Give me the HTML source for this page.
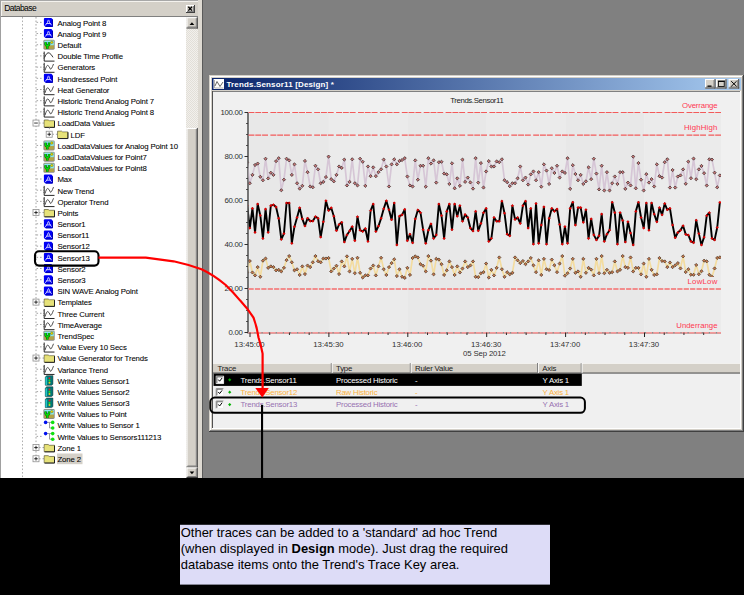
<!DOCTYPE html>
<html><head><meta charset="utf-8"><style>
html,body{margin:0;padding:0;background:#000;width:744px;height:595px;overflow:hidden}
svg{display:block;font-family:'Liberation Sans',sans-serif}
text{font-family:'Liberation Sans',sans-serif}
</style></head><body>
<svg width="744" height="595" viewBox="0 0 744 595">
<rect x="0" y="0" width="744" height="595" fill="#000" />
<rect x="0" y="0" width="744" height="478" fill="#808080" />
<rect x="0" y="0" width="203" height="478" fill="#d4d0c8" />
<rect x="0" y="0" width="203" height="1" fill="#a8a8a8" />
<rect x="0" y="0" width="1" height="478" fill="#a0a0a0" />
<rect x="1" y="1" width="197" height="1" fill="#f4f2ee" />
<rect x="1" y="1" width="1" height="15" fill="#f4f2ee" />
<rect x="198" y="0" width="4" height="478" fill="#dedad2" />
<rect x="202" y="0" width="1" height="478" fill="#5a5a5a" />
<text x="4.2" y="11.2" font-size="8.5" fill="#000" text-anchor="start" font-weight="normal" letter-spacing="-0.55" >Database</text>
<rect x="1" y="16" width="197" height="1" fill="#808080" />
<rect x="186" y="5" width="9" height="8" fill="#d4d0c8" />
<rect x="186" y="5" width="8" height="1" fill="#fff" />
<rect x="186" y="5" width="1" height="7" fill="#fff" />
<rect x="186" y="12" width="9" height="1" fill="#404040" />
<rect x="194" y="5" width="1" height="8" fill="#404040" />
<rect x="187" y="11" width="7" height="1" fill="#808080" />
<rect x="193" y="6" width="1" height="6" fill="#808080" />
<path d="M188.3 6.8 L192 10.6 M192 6.8 L188.3 10.6" stroke="#000" stroke-width="1.3"/>
<rect x="1" y="17" width="185" height="461" fill="#ffffff" />
<defs><pattern id="dith" width="2" height="2" patternUnits="userSpaceOnUse"><rect width="2" height="2" fill="#f2f0ec"/><rect width="1" height="1" fill="#e2dfd8"/><rect x="1" y="1" width="1" height="1" fill="#e2dfd8"/></pattern></defs>
<rect x="186" y="17" width="12" height="461" fill="url(#dith)" />
<rect x="186.5" y="17.2" width="11.3" height="11.3" fill="#d4d0c8" />
<rect x="186.5" y="17.2" width="11.3" height="1" fill="#fff" />
<rect x="186.5" y="17.2" width="1" height="11.3" fill="#fff" />
<rect x="186.5" y="27.5" width="11.3" height="1" fill="#404040" />
<rect x="196.8" y="17.2" width="1" height="11.3" fill="#404040" />
<rect x="187.5" y="26.5" width="9.3" height="1" fill="#808080" />
<rect x="195.8" y="18.2" width="1" height="9.3" fill="#808080" />
<path d="M189.6 25 L194.3 25 L191.95 22.3 Z" fill="#000"/>
<rect x="186.5" y="128" width="11.3" height="339.5" fill="#d4d0c8" />
<rect x="186.5" y="128" width="11.3" height="1" fill="#fff" />
<rect x="186.5" y="128" width="1" height="339.5" fill="#fff" />
<rect x="186.5" y="466.5" width="11.3" height="1" fill="#404040" />
<rect x="196.8" y="128" width="1" height="339.5" fill="#404040" />
<rect x="187.5" y="465.5" width="9.3" height="1" fill="#808080" />
<rect x="195.8" y="129" width="1" height="337.5" fill="#808080" />
<rect x="186.5" y="467.5" width="11.3" height="10.5" fill="#d4d0c8" />
<rect x="186.5" y="467.5" width="11.3" height="1" fill="#fff" />
<rect x="186.5" y="467.5" width="1" height="10.5" fill="#fff" />
<rect x="186.5" y="477.0" width="11.3" height="1" fill="#404040" />
<rect x="196.8" y="467.5" width="1" height="10.5" fill="#404040" />
<rect x="187.5" y="476.0" width="9.3" height="1" fill="#808080" />
<rect x="195.8" y="468.5" width="1" height="8.5" fill="#808080" />
<path d="M189.6 471.5 L194.3 471.5 L191.95 474.2 Z" fill="#000"/>
<line x1="22.5" y1="17" x2="22.5" y2="478" stroke="#b0b0b0" stroke-width="1" stroke-dasharray="1.6 1.9"/>
<line x1="36" y1="17" x2="36" y2="458.76" stroke="#a4a4a4" stroke-width="1" stroke-dasharray="1.6 1.9"/>
<line x1="36.5" y1="22.35" x2="43.5" y2="22.35" stroke="#a4a4a4" stroke-width="1" stroke-dasharray="1.6 1.9"/>
<path d="M43.9 18.900000000000002 Q43.9 17.900000000000002 44.9 17.900000000000002 H51.3 L53.0 19.6 V25.900000000000002 Q53.0 26.900000000000002 52.0 26.900000000000002 H45.5 L43.9 25.300000000000004 Z" fill="#0000f4"/>
<path d="M52.5 19.900000000000002 V26.400000000000002 H45.9" stroke="#0000b0" stroke-width="1" fill="none"/>
<path d="M45.5 25.1 L47.5 22.5 Q48.0 19.900000000000002 48.5 19.900000000000002 Q49.0 19.900000000000002 49.5 22.5 L51.3 24.900000000000002 M46.5 23.5 H50.5" stroke="#c8c8ff" stroke-width="1" fill="none" stroke-linecap="round"/>
<text x="57.5" y="25.650000000000002" font-size="7.8" fill="#000" text-anchor="start" font-weight="normal" letter-spacing="-0.14" stroke="#000" stroke-width="0.07">Analog Point 8</text>
<line x1="36.5" y1="33.54" x2="43.5" y2="33.54" stroke="#a4a4a4" stroke-width="1" stroke-dasharray="1.6 1.9"/>
<path d="M43.9 30.09 Q43.9 29.09 44.9 29.09 H51.3 L53.0 30.79 V37.09 Q53.0 38.09 52.0 38.09 H45.5 L43.9 36.49 Z" fill="#0000f4"/>
<path d="M52.5 31.09 V37.59 H45.9" stroke="#0000b0" stroke-width="1" fill="none"/>
<path d="M45.5 36.29 L47.5 33.69 Q48.0 31.09 48.5 31.09 Q49.0 31.09 49.5 33.69 L51.3 36.09 M46.5 34.69 H50.5" stroke="#c8c8ff" stroke-width="1" fill="none" stroke-linecap="round"/>
<text x="57.5" y="36.839999999999996" font-size="7.8" fill="#000" text-anchor="start" font-weight="normal" letter-spacing="-0.14" stroke="#000" stroke-width="0.07">Analog Point 9</text>
<line x1="36.5" y1="44.730000000000004" x2="43.5" y2="44.730000000000004" stroke="#a4a4a4" stroke-width="1" stroke-dasharray="1.6 1.9"/>
<rect x="43.4" y="39.730000000000004" width="11.3" height="10" rx="1.4" fill="#8a8a8a"/>
<rect x="44.3" y="40.63" width="9.5" height="8.2" fill="#b4a444"/>
<rect x="44.3" y="40.63" width="9.5" height="4.6" fill="#88e8f0"/>
<circle cx="51.8" cy="42.330000000000005" r="1.2" fill="#f0e000" stroke="#505000" stroke-width="0.4"/>
<path d="M47.3 48.63 V45.330000000000005 M45.6 42.13 V44.53 Q45.8 45.53 47.3 45.53 Q48.8 45.53 49.0 44.53 V42.13" stroke="#104010" stroke-width="2.5" fill="none"/>
<path d="M47.3 48.63 V45.330000000000005 M45.6 42.13 V44.53 Q45.8 45.53 47.3 45.53 Q48.8 45.53 49.0 44.53 V42.13" stroke="#00e000" stroke-width="1.5" fill="none"/>
<text x="57.5" y="48.03" font-size="7.8" fill="#000" text-anchor="start" font-weight="normal" letter-spacing="-0.14" stroke="#000" stroke-width="0.07">Default</text>
<line x1="36.5" y1="55.92" x2="43.5" y2="55.92" stroke="#a4a4a4" stroke-width="1" stroke-dasharray="1.6 1.9"/>
<path d="M44.2 51.620000000000005 V61.120000000000005 H54.5" stroke="#101010" stroke-width="0.9" fill="none"/>
<path d="M43.400000000000006 53.42 H44.2 M43.400000000000006 55.92 H44.2 M43.400000000000006 58.120000000000005 H44.2" stroke="#303030" stroke-width="0.7"/>
<path d="M44.6 57.52 Q46.7 51.92 49.2 52.92 Q51.2 53.92 53.0 57.32" stroke="#202020" stroke-width="0.9" fill="none"/>
<text x="57.5" y="59.22" font-size="7.8" fill="#000" text-anchor="start" font-weight="normal" letter-spacing="-0.14" stroke="#000" stroke-width="0.07">Double Time Profile</text>
<line x1="36.5" y1="67.11" x2="43.5" y2="67.11" stroke="#a4a4a4" stroke-width="1" stroke-dasharray="1.6 1.9"/>
<path d="M44.2 62.81 V72.31 H54.5" stroke="#101010" stroke-width="0.9" fill="none"/>
<path d="M43.400000000000006 64.61 H44.2 M43.400000000000006 67.11 H44.2 M43.400000000000006 69.31 H44.2" stroke="#303030" stroke-width="0.7"/>
<path d="M45.0 70.51 Q46.6 64.91 47.800000000000004 65.41 Q49.2 65.91 50.400000000000006 69.11 Q51.2 70.11 53.5 64.01" stroke="#505050" stroke-width="1" fill="none"/>
<text x="57.5" y="70.41" font-size="7.8" fill="#000" text-anchor="start" font-weight="normal" letter-spacing="-0.14" stroke="#000" stroke-width="0.07">Generators</text>
<line x1="36.5" y1="78.3" x2="43.5" y2="78.3" stroke="#a4a4a4" stroke-width="1" stroke-dasharray="1.6 1.9"/>
<path d="M43.9 74.85 Q43.9 73.85 44.9 73.85 H51.3 L53.0 75.55 V81.85 Q53.0 82.85 52.0 82.85 H45.5 L43.9 81.25 Z" fill="#0000f4"/>
<path d="M52.5 75.85 V82.35 H45.9" stroke="#0000b0" stroke-width="1" fill="none"/>
<path d="M45.5 81.05 L47.5 78.44999999999999 Q48.0 75.85 48.5 75.85 Q49.0 75.85 49.5 78.44999999999999 L51.3 80.85 M46.5 79.44999999999999 H50.5" stroke="#c8c8ff" stroke-width="1" fill="none" stroke-linecap="round"/>
<text x="57.5" y="81.6" font-size="7.8" fill="#000" text-anchor="start" font-weight="normal" letter-spacing="-0.14" stroke="#000" stroke-width="0.07">Handressed Point</text>
<line x1="36.5" y1="89.49000000000001" x2="43.5" y2="89.49000000000001" stroke="#a4a4a4" stroke-width="1" stroke-dasharray="1.6 1.9"/>
<path d="M44.2 85.19000000000001 V94.69000000000001 H54.5" stroke="#101010" stroke-width="0.9" fill="none"/>
<path d="M43.400000000000006 86.99000000000001 H44.2 M43.400000000000006 89.49000000000001 H44.2 M43.400000000000006 91.69000000000001 H44.2" stroke="#303030" stroke-width="0.7"/>
<path d="M45.0 92.89000000000001 Q46.6 87.29 47.800000000000004 87.79 Q49.2 88.29 50.400000000000006 91.49000000000001 Q51.2 92.49000000000001 53.5 86.39000000000001" stroke="#505050" stroke-width="1" fill="none"/>
<text x="57.5" y="92.79" font-size="7.8" fill="#000" text-anchor="start" font-weight="normal" letter-spacing="-0.14" stroke="#000" stroke-width="0.07">Heat Generator</text>
<line x1="36.5" y1="100.68" x2="43.5" y2="100.68" stroke="#a4a4a4" stroke-width="1" stroke-dasharray="1.6 1.9"/>
<path d="M44.2 96.38000000000001 V105.88000000000001 H54.5" stroke="#101010" stroke-width="0.9" fill="none"/>
<path d="M43.400000000000006 98.18 H44.2 M43.400000000000006 100.68 H44.2 M43.400000000000006 102.88000000000001 H44.2" stroke="#303030" stroke-width="0.7"/>
<path d="M45.0 104.08000000000001 Q46.6 98.48 47.800000000000004 98.98 Q49.2 99.48 50.400000000000006 102.68 Q51.2 103.68 53.5 97.58000000000001" stroke="#505050" stroke-width="1" fill="none"/>
<text x="57.5" y="103.98" font-size="7.8" fill="#000" text-anchor="start" font-weight="normal" letter-spacing="-0.14" stroke="#000" stroke-width="0.07">Historic Trend Analog Point 7</text>
<line x1="36.5" y1="111.87" x2="43.5" y2="111.87" stroke="#a4a4a4" stroke-width="1" stroke-dasharray="1.6 1.9"/>
<path d="M44.2 107.57000000000001 V117.07000000000001 H54.5" stroke="#101010" stroke-width="0.9" fill="none"/>
<path d="M43.400000000000006 109.37 H44.2 M43.400000000000006 111.87 H44.2 M43.400000000000006 114.07000000000001 H44.2" stroke="#303030" stroke-width="0.7"/>
<path d="M45.0 115.27000000000001 Q46.6 109.67 47.800000000000004 110.17 Q49.2 110.67 50.400000000000006 113.87 Q51.2 114.87 53.5 108.77000000000001" stroke="#505050" stroke-width="1" fill="none"/>
<text x="57.5" y="115.17" font-size="7.8" fill="#000" text-anchor="start" font-weight="normal" letter-spacing="-0.14" stroke="#000" stroke-width="0.07">Historic Trend Analog Point 8</text>
<line x1="39" y1="123.06" x2="44" y2="123.06" stroke="#a4a4a4" stroke-width="1" stroke-dasharray="1.6 1.9"/>
<rect x="33" y="120.06" width="6" height="6" fill="#fff" stroke="#909090" stroke-width="0.8"/>
<path d="M34.2 123.06 H37.8" stroke="#000" stroke-width="0.8"/>
<path d="M44.2 119.96000000000001 H48.2 L49.2 120.76 H54.5 V127.16000000000001 H44.2 Z" fill="#e8e070" stroke="#404020" stroke-width="0.6"/>
<rect x="44.800000000000004" y="121.56" width="9.2" height="5.1" fill="#e6e27a"/>
<path d="M54.5 121.16000000000001 V127.36 H44.6" stroke="#202020" stroke-width="1" fill="none"/>
<text x="57.5" y="126.36" font-size="7.8" fill="#000" text-anchor="start" font-weight="normal" letter-spacing="-0.14" stroke="#000" stroke-width="0.07">LoadData Values</text>
<line x1="49.4" y1="127.56" x2="49.4" y2="131.25" stroke="#a4a4a4" stroke-width="1" stroke-dasharray="1.6 1.9"/>
<line x1="52.4" y1="134.25" x2="57.4" y2="134.25" stroke="#a4a4a4" stroke-width="1" stroke-dasharray="1.6 1.9"/>
<rect x="46.2" y="131.25" width="6" height="6" fill="#fff" stroke="#909090" stroke-width="0.8"/>
<path d="M47.400000000000006 134.25 H51.0" stroke="#000" stroke-width="0.8"/>
<path d="M49.2 132.45 V136.05" stroke="#000" stroke-width="0.8"/>
<path d="M57.6 131.14999999999998 H61.6 L62.6 131.95 H67.9 V138.35 H57.6 Z" fill="#e8e070" stroke="#404020" stroke-width="0.6"/>
<rect x="58.2" y="132.75" width="9.2" height="5.1" fill="#e6e27a"/>
<path d="M67.9 132.35 V138.54999999999998 H58.0" stroke="#202020" stroke-width="1" fill="none"/>
<text x="70.5" y="137.55" font-size="7.8" fill="#000" text-anchor="start" font-weight="normal" letter-spacing="-0.14" stroke="#000" stroke-width="0.07">LDF</text>
<line x1="36.5" y1="145.44" x2="43.5" y2="145.44" stroke="#a4a4a4" stroke-width="1" stroke-dasharray="1.6 1.9"/>
<rect x="43.4" y="140.44" width="11.3" height="10" rx="1.4" fill="#8a8a8a"/>
<rect x="44.3" y="141.34" width="9.5" height="8.2" fill="#b4a444"/>
<rect x="44.3" y="141.34" width="9.5" height="4.6" fill="#88e8f0"/>
<circle cx="51.8" cy="143.04" r="1.2" fill="#f0e000" stroke="#505000" stroke-width="0.4"/>
<path d="M47.3 149.34 V146.04 M45.6 142.84 V145.24 Q45.8 146.24 47.3 146.24 Q48.8 146.24 49.0 145.24 V142.84" stroke="#104010" stroke-width="2.5" fill="none"/>
<path d="M47.3 149.34 V146.04 M45.6 142.84 V145.24 Q45.8 146.24 47.3 146.24 Q48.8 146.24 49.0 145.24 V142.84" stroke="#00e000" stroke-width="1.5" fill="none"/>
<text x="57.5" y="148.74" font-size="7.8" fill="#000" text-anchor="start" font-weight="normal" letter-spacing="-0.14" stroke="#000" stroke-width="0.07">LoadDataValues for Analog Point 10</text>
<line x1="36.5" y1="156.63" x2="43.5" y2="156.63" stroke="#a4a4a4" stroke-width="1" stroke-dasharray="1.6 1.9"/>
<rect x="43.4" y="151.63" width="11.3" height="10" rx="1.4" fill="#8a8a8a"/>
<rect x="44.3" y="152.53" width="9.5" height="8.2" fill="#b4a444"/>
<rect x="44.3" y="152.53" width="9.5" height="4.6" fill="#88e8f0"/>
<circle cx="51.8" cy="154.23" r="1.2" fill="#f0e000" stroke="#505000" stroke-width="0.4"/>
<path d="M47.3 160.53 V157.23 M45.6 154.03 V156.43 Q45.8 157.43 47.3 157.43 Q48.8 157.43 49.0 156.43 V154.03" stroke="#104010" stroke-width="2.5" fill="none"/>
<path d="M47.3 160.53 V157.23 M45.6 154.03 V156.43 Q45.8 157.43 47.3 157.43 Q48.8 157.43 49.0 156.43 V154.03" stroke="#00e000" stroke-width="1.5" fill="none"/>
<text x="57.5" y="159.93" font-size="7.8" fill="#000" text-anchor="start" font-weight="normal" letter-spacing="-0.14" stroke="#000" stroke-width="0.07">LoadDataValues for Point7</text>
<line x1="36.5" y1="167.82" x2="43.5" y2="167.82" stroke="#a4a4a4" stroke-width="1" stroke-dasharray="1.6 1.9"/>
<rect x="43.4" y="162.82" width="11.3" height="10" rx="1.4" fill="#8a8a8a"/>
<rect x="44.3" y="163.72" width="9.5" height="8.2" fill="#b4a444"/>
<rect x="44.3" y="163.72" width="9.5" height="4.6" fill="#88e8f0"/>
<circle cx="51.8" cy="165.42" r="1.2" fill="#f0e000" stroke="#505000" stroke-width="0.4"/>
<path d="M47.3 171.72 V168.42 M45.6 165.22 V167.62 Q45.8 168.62 47.3 168.62 Q48.8 168.62 49.0 167.62 V165.22" stroke="#104010" stroke-width="2.5" fill="none"/>
<path d="M47.3 171.72 V168.42 M45.6 165.22 V167.62 Q45.8 168.62 47.3 168.62 Q48.8 168.62 49.0 167.62 V165.22" stroke="#00e000" stroke-width="1.5" fill="none"/>
<text x="57.5" y="171.12" font-size="7.8" fill="#000" text-anchor="start" font-weight="normal" letter-spacing="-0.14" stroke="#000" stroke-width="0.07">LoadDataValues for Point8</text>
<line x1="36.5" y1="179.01" x2="43.5" y2="179.01" stroke="#a4a4a4" stroke-width="1" stroke-dasharray="1.6 1.9"/>
<path d="M43.9 175.56 Q43.9 174.56 44.9 174.56 H51.3 L53.0 176.26 V182.56 Q53.0 183.56 52.0 183.56 H45.5 L43.9 181.96 Z" fill="#0000f4"/>
<path d="M52.5 176.56 V183.06 H45.9" stroke="#0000b0" stroke-width="1" fill="none"/>
<path d="M45.5 181.76 L47.5 179.16 Q48.0 176.56 48.5 176.56 Q49.0 176.56 49.5 179.16 L51.3 181.56 M46.5 180.16 H50.5" stroke="#c8c8ff" stroke-width="1" fill="none" stroke-linecap="round"/>
<text x="57.5" y="182.31" font-size="7.8" fill="#000" text-anchor="start" font-weight="normal" letter-spacing="-0.14" stroke="#000" stroke-width="0.07">Max</text>
<line x1="36.5" y1="190.2" x2="43.5" y2="190.2" stroke="#a4a4a4" stroke-width="1" stroke-dasharray="1.6 1.9"/>
<path d="M44.2 185.89999999999998 V195.39999999999998 H54.5" stroke="#101010" stroke-width="0.9" fill="none"/>
<path d="M43.400000000000006 187.7 H44.2 M43.400000000000006 190.2 H44.2 M43.400000000000006 192.39999999999998 H44.2" stroke="#303030" stroke-width="0.7"/>
<path d="M45.0 193.6 Q46.6 188.0 47.800000000000004 188.5 Q49.2 189.0 50.400000000000006 192.2 Q51.2 193.2 53.5 187.1" stroke="#505050" stroke-width="1" fill="none"/>
<text x="57.5" y="193.5" font-size="7.8" fill="#000" text-anchor="start" font-weight="normal" letter-spacing="-0.14" stroke="#000" stroke-width="0.07">New Trend</text>
<line x1="36.5" y1="201.39" x2="43.5" y2="201.39" stroke="#a4a4a4" stroke-width="1" stroke-dasharray="1.6 1.9"/>
<path d="M44.2 197.08999999999997 V206.58999999999997 H54.5" stroke="#101010" stroke-width="0.9" fill="none"/>
<path d="M43.400000000000006 198.89 H44.2 M43.400000000000006 201.39 H44.2 M43.400000000000006 203.58999999999997 H44.2" stroke="#303030" stroke-width="0.7"/>
<path d="M45.0 204.79 Q46.6 199.19 47.800000000000004 199.69 Q49.2 200.19 50.400000000000006 203.39 Q51.2 204.39 53.5 198.29" stroke="#505050" stroke-width="1" fill="none"/>
<text x="57.5" y="204.69" font-size="7.8" fill="#000" text-anchor="start" font-weight="normal" letter-spacing="-0.14" stroke="#000" stroke-width="0.07">Operator Trend</text>
<line x1="39" y1="212.57999999999998" x2="44" y2="212.57999999999998" stroke="#a4a4a4" stroke-width="1" stroke-dasharray="1.6 1.9"/>
<rect x="33" y="209.57999999999998" width="6" height="6" fill="#fff" stroke="#909090" stroke-width="0.8"/>
<path d="M34.2 212.57999999999998 H37.8" stroke="#000" stroke-width="0.8"/>
<path d="M36 210.77999999999997 V214.38" stroke="#000" stroke-width="0.8"/>
<path d="M44.2 209.47999999999996 H48.2 L49.2 210.27999999999997 H54.5 V216.67999999999998 H44.2 Z" fill="#e8e070" stroke="#404020" stroke-width="0.6"/>
<rect x="44.800000000000004" y="211.07999999999998" width="9.2" height="5.1" fill="#e6e27a"/>
<path d="M54.5 210.67999999999998 V216.87999999999997 H44.6" stroke="#202020" stroke-width="1" fill="none"/>
<text x="57.5" y="215.88" font-size="7.8" fill="#000" text-anchor="start" font-weight="normal" letter-spacing="-0.14" stroke="#000" stroke-width="0.07">Points</text>
<line x1="36.5" y1="223.76999999999998" x2="43.5" y2="223.76999999999998" stroke="#a4a4a4" stroke-width="1" stroke-dasharray="1.6 1.9"/>
<path d="M43.9 220.32 Q43.9 219.32 44.9 219.32 H51.3 L53.0 221.01999999999998 V227.32 Q53.0 228.32 52.0 228.32 H45.5 L43.9 226.72 Z" fill="#0000f4"/>
<path d="M52.5 221.32 V227.82 H45.9" stroke="#0000b0" stroke-width="1" fill="none"/>
<path d="M45.5 226.51999999999998 L47.5 223.92 Q48.0 221.32 48.5 221.32 Q49.0 221.32 49.5 223.92 L51.3 226.32 M46.5 224.92 H50.5" stroke="#c8c8ff" stroke-width="1" fill="none" stroke-linecap="round"/>
<text x="57.5" y="227.07" font-size="7.8" fill="#000" text-anchor="start" font-weight="normal" letter-spacing="-0.14" stroke="#000" stroke-width="0.07">Sensor1</text>
<line x1="36.5" y1="234.95999999999998" x2="43.5" y2="234.95999999999998" stroke="#a4a4a4" stroke-width="1" stroke-dasharray="1.6 1.9"/>
<path d="M43.9 231.51 Q43.9 230.51 44.9 230.51 H51.3 L53.0 232.20999999999998 V238.51 Q53.0 239.51 52.0 239.51 H45.5 L43.9 237.91 Z" fill="#0000f4"/>
<path d="M52.5 232.51 V239.01 H45.9" stroke="#0000b0" stroke-width="1" fill="none"/>
<path d="M45.5 237.70999999999998 L47.5 235.10999999999999 Q48.0 232.51 48.5 232.51 Q49.0 232.51 49.5 235.10999999999999 L51.3 237.51 M46.5 236.10999999999999 H50.5" stroke="#c8c8ff" stroke-width="1" fill="none" stroke-linecap="round"/>
<text x="57.5" y="238.26" font-size="7.8" fill="#000" text-anchor="start" font-weight="normal" letter-spacing="-0.14" stroke="#000" stroke-width="0.07">Sensor11</text>
<line x1="36.5" y1="246.14999999999998" x2="43.5" y2="246.14999999999998" stroke="#a4a4a4" stroke-width="1" stroke-dasharray="1.6 1.9"/>
<path d="M43.9 242.7 Q43.9 241.7 44.9 241.7 H51.3 L53.0 243.39999999999998 V249.7 Q53.0 250.7 52.0 250.7 H45.5 L43.9 249.1 Z" fill="#0000f4"/>
<path d="M52.5 243.7 V250.2 H45.9" stroke="#0000b0" stroke-width="1" fill="none"/>
<path d="M45.5 248.89999999999998 L47.5 246.29999999999998 Q48.0 243.7 48.5 243.7 Q49.0 243.7 49.5 246.29999999999998 L51.3 248.7 M46.5 247.29999999999998 H50.5" stroke="#c8c8ff" stroke-width="1" fill="none" stroke-linecap="round"/>
<text x="57.5" y="249.45" font-size="7.8" fill="#000" text-anchor="start" font-weight="normal" letter-spacing="-0.14" stroke="#000" stroke-width="0.07">Sensor12</text>
<line x1="36.5" y1="257.34" x2="43.5" y2="257.34" stroke="#a4a4a4" stroke-width="1" stroke-dasharray="1.6 1.9"/>
<path d="M43.9 253.89 Q43.9 252.89 44.9 252.89 H51.3 L53.0 254.58999999999997 V260.89 Q53.0 261.89 52.0 261.89 H45.5 L43.9 260.28999999999996 Z" fill="#0000f4"/>
<path d="M52.5 254.89 V261.39 H45.9" stroke="#0000b0" stroke-width="1" fill="none"/>
<path d="M45.5 260.09 L47.5 257.49 Q48.0 254.89 48.5 254.89 Q49.0 254.89 49.5 257.49 L51.3 259.89 M46.5 258.49 H50.5" stroke="#c8c8ff" stroke-width="1" fill="none" stroke-linecap="round"/>
<text x="57.5" y="260.64" font-size="7.8" fill="#000" text-anchor="start" font-weight="normal" letter-spacing="-0.14" stroke="#000" stroke-width="0.07">Sensor13</text>
<line x1="36.5" y1="268.53" x2="43.5" y2="268.53" stroke="#a4a4a4" stroke-width="1" stroke-dasharray="1.6 1.9"/>
<path d="M43.9 265.08 Q43.9 264.08 44.9 264.08 H51.3 L53.0 265.78 V272.08 Q53.0 273.08 52.0 273.08 H45.5 L43.9 271.47999999999996 Z" fill="#0000f4"/>
<path d="M52.5 266.08 V272.58 H45.9" stroke="#0000b0" stroke-width="1" fill="none"/>
<path d="M45.5 271.28 L47.5 268.68 Q48.0 266.08 48.5 266.08 Q49.0 266.08 49.5 268.68 L51.3 271.08 M46.5 269.68 H50.5" stroke="#c8c8ff" stroke-width="1" fill="none" stroke-linecap="round"/>
<text x="57.5" y="271.83" font-size="7.8" fill="#000" text-anchor="start" font-weight="normal" letter-spacing="-0.14" stroke="#000" stroke-width="0.07">Sensor2</text>
<line x1="36.5" y1="279.72" x2="43.5" y2="279.72" stroke="#a4a4a4" stroke-width="1" stroke-dasharray="1.6 1.9"/>
<path d="M43.9 276.27000000000004 Q43.9 275.27000000000004 44.9 275.27000000000004 H51.3 L53.0 276.97 V283.27000000000004 Q53.0 284.27000000000004 52.0 284.27000000000004 H45.5 L43.9 282.67 Z" fill="#0000f4"/>
<path d="M52.5 277.27000000000004 V283.77000000000004 H45.9" stroke="#0000b0" stroke-width="1" fill="none"/>
<path d="M45.5 282.47 L47.5 279.87000000000006 Q48.0 277.27000000000004 48.5 277.27000000000004 Q49.0 277.27000000000004 49.5 279.87000000000006 L51.3 282.27000000000004 M46.5 280.87000000000006 H50.5" stroke="#c8c8ff" stroke-width="1" fill="none" stroke-linecap="round"/>
<text x="57.5" y="283.02000000000004" font-size="7.8" fill="#000" text-anchor="start" font-weight="normal" letter-spacing="-0.14" stroke="#000" stroke-width="0.07">Sensor3</text>
<line x1="36.5" y1="290.91" x2="43.5" y2="290.91" stroke="#a4a4a4" stroke-width="1" stroke-dasharray="1.6 1.9"/>
<path d="M43.9 287.46000000000004 Q43.9 286.46000000000004 44.9 286.46000000000004 H51.3 L53.0 288.16 V294.46000000000004 Q53.0 295.46000000000004 52.0 295.46000000000004 H45.5 L43.9 293.86 Z" fill="#0000f4"/>
<path d="M52.5 288.46000000000004 V294.96000000000004 H45.9" stroke="#0000b0" stroke-width="1" fill="none"/>
<path d="M45.5 293.66 L47.5 291.06000000000006 Q48.0 288.46000000000004 48.5 288.46000000000004 Q49.0 288.46000000000004 49.5 291.06000000000006 L51.3 293.46000000000004 M46.5 292.06000000000006 H50.5" stroke="#c8c8ff" stroke-width="1" fill="none" stroke-linecap="round"/>
<text x="57.5" y="294.21000000000004" font-size="7.8" fill="#000" text-anchor="start" font-weight="normal" letter-spacing="-0.14" stroke="#000" stroke-width="0.07">SIN WAVE Analog Point</text>
<line x1="39" y1="302.1" x2="44" y2="302.1" stroke="#a4a4a4" stroke-width="1" stroke-dasharray="1.6 1.9"/>
<rect x="33" y="299.1" width="6" height="6" fill="#fff" stroke="#909090" stroke-width="0.8"/>
<path d="M34.2 302.1 H37.8" stroke="#000" stroke-width="0.8"/>
<path d="M36 300.3 V303.90000000000003" stroke="#000" stroke-width="0.8"/>
<path d="M44.2 299.0 H48.2 L49.2 299.8 H54.5 V306.2 H44.2 Z" fill="#e8e070" stroke="#404020" stroke-width="0.6"/>
<rect x="44.800000000000004" y="300.6" width="9.2" height="5.1" fill="#e6e27a"/>
<path d="M54.5 300.2 V306.40000000000003 H44.6" stroke="#202020" stroke-width="1" fill="none"/>
<text x="57.5" y="305.40000000000003" font-size="7.8" fill="#000" text-anchor="start" font-weight="normal" letter-spacing="-0.14" stroke="#000" stroke-width="0.07">Templates</text>
<line x1="36.5" y1="313.29" x2="43.5" y2="313.29" stroke="#a4a4a4" stroke-width="1" stroke-dasharray="1.6 1.9"/>
<path d="M44.2 308.99 V318.49 H54.5" stroke="#101010" stroke-width="0.9" fill="none"/>
<path d="M43.400000000000006 310.79 H44.2 M43.400000000000006 313.29 H44.2 M43.400000000000006 315.49 H44.2" stroke="#303030" stroke-width="0.7"/>
<path d="M45.0 316.69 Q46.6 311.09000000000003 47.800000000000004 311.59000000000003 Q49.2 312.09000000000003 50.400000000000006 315.29 Q51.2 316.29 53.5 310.19" stroke="#505050" stroke-width="1" fill="none"/>
<text x="57.5" y="316.59000000000003" font-size="7.8" fill="#000" text-anchor="start" font-weight="normal" letter-spacing="-0.14" stroke="#000" stroke-width="0.07">Three Current</text>
<line x1="36.5" y1="324.48" x2="43.5" y2="324.48" stroke="#a4a4a4" stroke-width="1" stroke-dasharray="1.6 1.9"/>
<path d="M44.2 320.18 V329.68 H54.5" stroke="#101010" stroke-width="0.9" fill="none"/>
<path d="M43.400000000000006 321.98 H44.2 M43.400000000000006 324.48 H44.2 M43.400000000000006 326.68 H44.2" stroke="#303030" stroke-width="0.7"/>
<path d="M45.0 327.88 Q46.6 322.28000000000003 47.800000000000004 322.78000000000003 Q49.2 323.28000000000003 50.400000000000006 326.48 Q51.2 327.48 53.5 321.38" stroke="#505050" stroke-width="1" fill="none"/>
<text x="57.5" y="327.78000000000003" font-size="7.8" fill="#000" text-anchor="start" font-weight="normal" letter-spacing="-0.14" stroke="#000" stroke-width="0.07">TimeAverage</text>
<line x1="36.5" y1="335.67" x2="43.5" y2="335.67" stroke="#a4a4a4" stroke-width="1" stroke-dasharray="1.6 1.9"/>
<rect x="43.4" y="330.67" width="11.3" height="10" rx="1.4" fill="#8a8a8a"/>
<rect x="44.3" y="331.57" width="9.5" height="8.2" fill="#b4a444"/>
<rect x="44.3" y="331.57" width="9.5" height="4.6" fill="#88e8f0"/>
<circle cx="51.8" cy="333.27000000000004" r="1.2" fill="#f0e000" stroke="#505000" stroke-width="0.4"/>
<path d="M47.3 339.57 V336.27000000000004 M45.6 333.07 V335.47 Q45.8 336.47 47.3 336.47 Q48.8 336.47 49.0 335.47 V333.07" stroke="#104010" stroke-width="2.5" fill="none"/>
<path d="M47.3 339.57 V336.27000000000004 M45.6 333.07 V335.47 Q45.8 336.47 47.3 336.47 Q48.8 336.47 49.0 335.47 V333.07" stroke="#00e000" stroke-width="1.5" fill="none"/>
<text x="57.5" y="338.97" font-size="7.8" fill="#000" text-anchor="start" font-weight="normal" letter-spacing="-0.14" stroke="#000" stroke-width="0.07">TrendSpec</text>
<line x1="36.5" y1="346.86" x2="43.5" y2="346.86" stroke="#a4a4a4" stroke-width="1" stroke-dasharray="1.6 1.9"/>
<path d="M44.2 342.56 V352.06 H54.5" stroke="#101010" stroke-width="0.9" fill="none"/>
<path d="M43.400000000000006 344.36 H44.2 M43.400000000000006 346.86 H44.2 M43.400000000000006 349.06 H44.2" stroke="#303030" stroke-width="0.7"/>
<path d="M45.0 350.26 Q46.6 344.66 47.800000000000004 345.16 Q49.2 345.66 50.400000000000006 348.86 Q51.2 349.86 53.5 343.76" stroke="#505050" stroke-width="1" fill="none"/>
<text x="57.5" y="350.16" font-size="7.8" fill="#000" text-anchor="start" font-weight="normal" letter-spacing="-0.14" stroke="#000" stroke-width="0.07">Value Every 10 Secs</text>
<line x1="39" y1="358.05" x2="44" y2="358.05" stroke="#a4a4a4" stroke-width="1" stroke-dasharray="1.6 1.9"/>
<rect x="33" y="355.05" width="6" height="6" fill="#fff" stroke="#909090" stroke-width="0.8"/>
<path d="M34.2 358.05 H37.8" stroke="#000" stroke-width="0.8"/>
<path d="M36 356.25 V359.85" stroke="#000" stroke-width="0.8"/>
<path d="M44.2 354.95 H48.2 L49.2 355.75 H54.5 V362.15 H44.2 Z" fill="#e8e070" stroke="#404020" stroke-width="0.6"/>
<rect x="44.800000000000004" y="356.55" width="9.2" height="5.1" fill="#e6e27a"/>
<path d="M54.5 356.15 V362.35 H44.6" stroke="#202020" stroke-width="1" fill="none"/>
<text x="57.5" y="361.35" font-size="7.8" fill="#000" text-anchor="start" font-weight="normal" letter-spacing="-0.14" stroke="#000" stroke-width="0.07">Value Generator for Trends</text>
<line x1="36.5" y1="369.24" x2="43.5" y2="369.24" stroke="#a4a4a4" stroke-width="1" stroke-dasharray="1.6 1.9"/>
<path d="M44.2 364.94 V374.44 H54.5" stroke="#101010" stroke-width="0.9" fill="none"/>
<path d="M43.400000000000006 366.74 H44.2 M43.400000000000006 369.24 H44.2 M43.400000000000006 371.44 H44.2" stroke="#303030" stroke-width="0.7"/>
<path d="M45.0 372.64 Q46.6 367.04 47.800000000000004 367.54 Q49.2 368.04 50.400000000000006 371.24 Q51.2 372.24 53.5 366.14" stroke="#505050" stroke-width="1" fill="none"/>
<text x="57.5" y="372.54" font-size="7.8" fill="#000" text-anchor="start" font-weight="normal" letter-spacing="-0.14" stroke="#000" stroke-width="0.07">Variance Trend</text>
<line x1="36.5" y1="380.43" x2="43.5" y2="380.43" stroke="#a4a4a4" stroke-width="1" stroke-dasharray="1.6 1.9"/>
<path d="M45.3 376.93 L46.699999999999996 375.63 H52.9 V384.23 L51.599999999999994 385.23 H45.3 Z" fill="#007878" stroke="#102020" stroke-width="0.5"/>
<rect x="45.5" y="377.13" width="1.6" height="7.9" fill="#20c8c8"/>
<circle cx="49.5" cy="378.23" r="1" fill="#e02020"/>
<circle cx="49.5" cy="380.53" r="1" fill="#20e020"/>
<circle cx="49.5" cy="382.73" r="1" fill="#e0d020"/>
<text x="57.5" y="383.73" font-size="7.8" fill="#000" text-anchor="start" font-weight="normal" letter-spacing="-0.14" stroke="#000" stroke-width="0.07">Write Values Sensor1</text>
<line x1="36.5" y1="391.62" x2="43.5" y2="391.62" stroke="#a4a4a4" stroke-width="1" stroke-dasharray="1.6 1.9"/>
<path d="M45.3 388.12 L46.699999999999996 386.82 H52.9 V395.42 L51.599999999999994 396.42 H45.3 Z" fill="#007878" stroke="#102020" stroke-width="0.5"/>
<rect x="45.5" y="388.32" width="1.6" height="7.9" fill="#20c8c8"/>
<circle cx="49.5" cy="389.42" r="1" fill="#e02020"/>
<circle cx="49.5" cy="391.71999999999997" r="1" fill="#20e020"/>
<circle cx="49.5" cy="393.92" r="1" fill="#e0d020"/>
<text x="57.5" y="394.92" font-size="7.8" fill="#000" text-anchor="start" font-weight="normal" letter-spacing="-0.14" stroke="#000" stroke-width="0.07">Write Values Sensor2</text>
<line x1="36.5" y1="402.81" x2="43.5" y2="402.81" stroke="#a4a4a4" stroke-width="1" stroke-dasharray="1.6 1.9"/>
<path d="M45.3 399.31 L46.699999999999996 398.01 H52.9 V406.61 L51.599999999999994 407.61 H45.3 Z" fill="#007878" stroke="#102020" stroke-width="0.5"/>
<rect x="45.5" y="399.51" width="1.6" height="7.9" fill="#20c8c8"/>
<circle cx="49.5" cy="400.61" r="1" fill="#e02020"/>
<circle cx="49.5" cy="402.90999999999997" r="1" fill="#20e020"/>
<circle cx="49.5" cy="405.11" r="1" fill="#e0d020"/>
<text x="57.5" y="406.11" font-size="7.8" fill="#000" text-anchor="start" font-weight="normal" letter-spacing="-0.14" stroke="#000" stroke-width="0.07">Write Values Sensor3</text>
<line x1="36.5" y1="414.0" x2="43.5" y2="414.0" stroke="#a4a4a4" stroke-width="1" stroke-dasharray="1.6 1.9"/>
<rect x="43.4" y="409.0" width="11.3" height="10" rx="1.4" fill="#8a8a8a"/>
<rect x="44.3" y="409.9" width="9.5" height="8.2" fill="#b4a444"/>
<rect x="44.3" y="409.9" width="9.5" height="4.6" fill="#88e8f0"/>
<circle cx="51.8" cy="411.6" r="1.2" fill="#f0e000" stroke="#505000" stroke-width="0.4"/>
<path d="M47.3 417.9 V414.6 M45.6 411.4 V413.8 Q45.8 414.8 47.3 414.8 Q48.8 414.8 49.0 413.8 V411.4" stroke="#104010" stroke-width="2.5" fill="none"/>
<path d="M47.3 417.9 V414.6 M45.6 411.4 V413.8 Q45.8 414.8 47.3 414.8 Q48.8 414.8 49.0 413.8 V411.4" stroke="#00e000" stroke-width="1.5" fill="none"/>
<text x="57.5" y="417.3" font-size="7.8" fill="#000" text-anchor="start" font-weight="normal" letter-spacing="-0.14" stroke="#000" stroke-width="0.07">Write Values to Point</text>
<line x1="36.5" y1="425.19" x2="43.5" y2="425.19" stroke="#a4a4a4" stroke-width="1" stroke-dasharray="1.6 1.9"/>
<path d="M46 422.39 H49.5 V427.99 H52.5 M49.5 422.39 H52.5" stroke="#808080" stroke-width="0.8" fill="none"/>
<circle cx="45.6" cy="422.39" r="1.8" fill="#0010f0"/>
<circle cx="52.7" cy="422.39" r="1.8" fill="#10e010"/>
<circle cx="52.7" cy="427.99" r="1.8" fill="#10e010"/>
<text x="57.5" y="428.49" font-size="7.8" fill="#000" text-anchor="start" font-weight="normal" letter-spacing="-0.14" stroke="#000" stroke-width="0.07">Write Values to Sensor 1</text>
<line x1="36.5" y1="436.38" x2="43.5" y2="436.38" stroke="#a4a4a4" stroke-width="1" stroke-dasharray="1.6 1.9"/>
<path d="M46 433.58 H49.5 V439.18 H52.5 M49.5 433.58 H52.5" stroke="#808080" stroke-width="0.8" fill="none"/>
<circle cx="45.6" cy="433.58" r="1.8" fill="#0010f0"/>
<circle cx="52.7" cy="433.58" r="1.8" fill="#10e010"/>
<circle cx="52.7" cy="439.18" r="1.8" fill="#10e010"/>
<text x="57.5" y="439.68" font-size="7.8" fill="#000" text-anchor="start" font-weight="normal" letter-spacing="-0.14" stroke="#000" stroke-width="0.07">Write Values to Sensors111213</text>
<line x1="39" y1="447.57" x2="44" y2="447.57" stroke="#a4a4a4" stroke-width="1" stroke-dasharray="1.6 1.9"/>
<rect x="33" y="444.57" width="6" height="6" fill="#fff" stroke="#909090" stroke-width="0.8"/>
<path d="M34.2 447.57 H37.8" stroke="#000" stroke-width="0.8"/>
<path d="M36 445.77 V449.37" stroke="#000" stroke-width="0.8"/>
<path d="M44.2 444.46999999999997 H48.2 L49.2 445.27 H54.5 V451.66999999999996 H44.2 Z" fill="#e8e070" stroke="#404020" stroke-width="0.6"/>
<rect x="44.800000000000004" y="446.07" width="9.2" height="5.1" fill="#e6e27a"/>
<path d="M54.5 445.66999999999996 V451.87 H44.6" stroke="#202020" stroke-width="1" fill="none"/>
<text x="57.5" y="450.87" font-size="7.8" fill="#000" text-anchor="start" font-weight="normal" letter-spacing="-0.14" stroke="#000" stroke-width="0.07">Zone 1</text>
<line x1="39" y1="458.76" x2="44" y2="458.76" stroke="#a4a4a4" stroke-width="1" stroke-dasharray="1.6 1.9"/>
<rect x="33" y="455.76" width="6" height="6" fill="#fff" stroke="#909090" stroke-width="0.8"/>
<path d="M34.2 458.76 H37.8" stroke="#000" stroke-width="0.8"/>
<path d="M36 456.96 V460.56" stroke="#000" stroke-width="0.8"/>
<path d="M44.2 455.65999999999997 H48.2 L49.2 456.46 H54.5 V462.85999999999996 H44.2 Z" fill="#e8e070" stroke="#404020" stroke-width="0.6"/>
<rect x="44.800000000000004" y="457.26" width="9.2" height="5.1" fill="#e6e27a"/>
<path d="M54.5 456.85999999999996 V463.06 H44.6" stroke="#202020" stroke-width="1" fill="none"/>
<rect x="57" y="453.5" width="25.5" height="10.7" fill="#d4d0c8" />
<text x="57.5" y="462.06" font-size="7.8" fill="#000" text-anchor="start" font-weight="normal" letter-spacing="-0.14" stroke="#000" stroke-width="0.07">Zone 2</text>
<rect x="209" y="75" width="535" height="357" fill="#d4d0c8" />
<rect x="209" y="75" width="534" height="1" fill="#d4d0c8" />
<rect x="210" y="76" width="532" height="1" fill="#ffffff" />
<rect x="210" y="76" width="1" height="354" fill="#ffffff" />
<rect x="743" y="75" width="1" height="357" fill="#404040" />
<rect x="209" y="431" width="535" height="1" fill="#404040" />
<rect x="742" y="76" width="1" height="355" fill="#808080" />
<rect x="210" y="430" width="533" height="1" fill="#808080" />
<defs><linearGradient id="tg" x1="0" x2="1" y1="0" y2="0"><stop offset="0" stop-color="#0a246a"/><stop offset="1" stop-color="#a6caf0"/></linearGradient></defs>
<rect x="212" y="78" width="529" height="12" fill="url(#tg)" />
<rect x="213.5" y="79" width="10.5" height="10" fill="#ffffff" />
<path d="M214.5 80 V88 H223.5" stroke="#909090" stroke-width="0.7" fill="none"/>
<path d="M215 86 L217 81.5 L220 86.5 L223 82" stroke="#404040" stroke-width="0.8" fill="none"/>
<text x="226.5" y="87" font-size="8" fill="#fff" text-anchor="start" font-weight="bold" letter-spacing="0.15" >Trends.Sensor11 [Design] *</text>
<rect x="705" y="79" width="10.5" height="9.5" fill="#d4d0c8" />
<rect x="705" y="79" width="10.5" height="1" fill="#fff" />
<rect x="705" y="79" width="1" height="9.5" fill="#fff" />
<rect x="705" y="87.5" width="10.5" height="1" fill="#404040" />
<rect x="714.5" y="79" width="1" height="9.5" fill="#404040" />
<rect x="706" y="86.5" width="8.5" height="1" fill="#808080" />
<rect x="713.5" y="80" width="1" height="7.5" fill="#808080" />
<rect x="716" y="79" width="10.5" height="9.5" fill="#d4d0c8" />
<rect x="716" y="79" width="10.5" height="1" fill="#fff" />
<rect x="716" y="79" width="1" height="9.5" fill="#fff" />
<rect x="716" y="87.5" width="10.5" height="1" fill="#404040" />
<rect x="725.5" y="79" width="1" height="9.5" fill="#404040" />
<rect x="717" y="86.5" width="8.5" height="1" fill="#808080" />
<rect x="724.5" y="80" width="1" height="7.5" fill="#808080" />
<rect x="728.7" y="79" width="10.5" height="9.5" fill="#d4d0c8" />
<rect x="728.7" y="79" width="10.5" height="1" fill="#fff" />
<rect x="728.7" y="79" width="1" height="9.5" fill="#fff" />
<rect x="728.7" y="87.5" width="10.5" height="1" fill="#404040" />
<rect x="738.2" y="79" width="1" height="9.5" fill="#404040" />
<rect x="729.7" y="86.5" width="8.5" height="1" fill="#808080" />
<rect x="737.2" y="80" width="1" height="7.5" fill="#808080" />
<rect x="707.5" y="85.5" width="4" height="1.3" fill="#000"/>
<rect x="718.4" y="81.2" width="5.8" height="5.2" fill="none" stroke="#000" stroke-width="0.8"/><rect x="718" y="80.8" width="6.6" height="1.1" fill="#000"/>
<path d="M731.2 81.2 L736.6 86.4 M736.6 81.2 L731.2 86.4" stroke="#000" stroke-width="1.0"/>
<rect x="212" y="91" width="529" height="1" fill="#808080" />
<rect x="212" y="91" width="1" height="337" fill="#505050" />
<rect x="212" y="428" width="529" height="1" fill="#ffffff" />
<rect x="740" y="91" width="1" height="338" fill="#ffffff" />
<rect x="213" y="92" width="527" height="336" fill="#f0f0f0" />
<rect x="250.0" y="112.5" width="78.89999999999998" height="220.0" fill="#e8e8e8" />
<rect x="328.9" y="112.5" width="78.90000000000003" height="220.0" fill="#ebebeb" />
<rect x="407.8" y="112.5" width="78.90000000000003" height="220.0" fill="#e8e8e8" />
<rect x="486.70000000000005" y="112.5" width="78.89999999999998" height="220.0" fill="#ebebeb" />
<rect x="565.6" y="112.5" width="78.89999999999998" height="220.0" fill="#e8e8e8" />
<rect x="644.5" y="112.5" width="76.5" height="220.0" fill="#ebebeb" />
<rect x="248.5" y="112.5" width="1.5" height="220.0" fill="#ebebeb" />
<line x1="248" y1="112.5" x2="248" y2="333.5" stroke="#686868" stroke-width="1.8" />
<line x1="244.5" y1="332.5" x2="248" y2="332.5" stroke="#303030" stroke-width="1" />
<text x="242.5" y="335.4" font-size="7.8" fill="#303030" text-anchor="end" font-weight="normal" letter-spacing="-0.3" >0.00</text>
<line x1="244.5" y1="288.5" x2="248" y2="288.5" stroke="#303030" stroke-width="1" />
<text x="242.5" y="291.4" font-size="7.8" fill="#303030" text-anchor="end" font-weight="normal" letter-spacing="-0.3" >20.00</text>
<line x1="244.5" y1="244.5" x2="248" y2="244.5" stroke="#303030" stroke-width="1" />
<text x="242.5" y="247.4" font-size="7.8" fill="#303030" text-anchor="end" font-weight="normal" letter-spacing="-0.3" >40.00</text>
<line x1="244.5" y1="200.5" x2="248" y2="200.5" stroke="#303030" stroke-width="1" />
<text x="242.5" y="203.4" font-size="7.8" fill="#303030" text-anchor="end" font-weight="normal" letter-spacing="-0.3" >60.00</text>
<line x1="244.5" y1="156.5" x2="248" y2="156.5" stroke="#303030" stroke-width="1" />
<text x="242.5" y="159.4" font-size="7.8" fill="#303030" text-anchor="end" font-weight="normal" letter-spacing="-0.3" >80.00</text>
<line x1="244.5" y1="112.49999999999997" x2="248" y2="112.49999999999997" stroke="#303030" stroke-width="1" />
<text x="242.5" y="115.39999999999998" font-size="7.8" fill="#303030" text-anchor="end" font-weight="normal" letter-spacing="-0.3" >100.00</text>
<line x1="246" y1="321.5" x2="248" y2="321.5" stroke="#303030" stroke-width="0.8" />
<line x1="246" y1="310.5" x2="248" y2="310.5" stroke="#303030" stroke-width="0.8" />
<line x1="246" y1="299.5" x2="248" y2="299.5" stroke="#303030" stroke-width="0.8" />
<line x1="246" y1="277.5" x2="248" y2="277.5" stroke="#303030" stroke-width="0.8" />
<line x1="246" y1="266.5" x2="248" y2="266.5" stroke="#303030" stroke-width="0.8" />
<line x1="246" y1="255.5" x2="248" y2="255.5" stroke="#303030" stroke-width="0.8" />
<line x1="246" y1="233.5" x2="248" y2="233.5" stroke="#303030" stroke-width="0.8" />
<line x1="246" y1="222.5" x2="248" y2="222.5" stroke="#303030" stroke-width="0.8" />
<line x1="246" y1="211.5" x2="248" y2="211.5" stroke="#303030" stroke-width="0.8" />
<line x1="246" y1="189.5" x2="248" y2="189.5" stroke="#303030" stroke-width="0.8" />
<line x1="246" y1="178.5" x2="248" y2="178.5" stroke="#303030" stroke-width="0.8" />
<line x1="246" y1="167.5" x2="248" y2="167.5" stroke="#303030" stroke-width="0.8" />
<line x1="246" y1="145.49999999999997" x2="248" y2="145.49999999999997" stroke="#303030" stroke-width="0.8" />
<line x1="246" y1="134.49999999999997" x2="248" y2="134.49999999999997" stroke="#303030" stroke-width="0.8" />
<line x1="246" y1="123.49999999999997" x2="248" y2="123.49999999999997" stroke="#303030" stroke-width="0.8" />
<line x1="248.5" y1="112.49999999999997" x2="721" y2="112.49999999999997" stroke="#f25a5a" stroke-width="1.2" stroke-dasharray="5.9 0.9 5.9 0.9 5.9 2.4"/>
<line x1="248.5" y1="135.15999999999997" x2="721" y2="135.15999999999997" stroke="#f25a5a" stroke-width="1.2" stroke-dasharray="5.9 0.9 5.9 0.9 5.9 2.4"/>
<line x1="248.5" y1="289.0" x2="721" y2="289.0" stroke="#f28c8c" stroke-width="1.9" stroke-dasharray="5.2 1.2"/>
<line x1="248.5" y1="332.9" x2="721" y2="332.9" stroke="#8c8c8c" stroke-width="1.8" />
<line x1="248.5" y1="332.9" x2="721" y2="332.9" stroke="#f49a9a" stroke-width="1.8" stroke-dasharray="5.9 1.2"/>
<line x1="250.0" y1="332.5" x2="250.0" y2="337.0" stroke="#202020" stroke-width="1" />
<line x1="269.725" y1="332.5" x2="269.725" y2="335.0" stroke="#303030" stroke-width="1" />
<line x1="289.45000000000005" y1="332.5" x2="289.45000000000005" y2="335.0" stroke="#303030" stroke-width="1" />
<line x1="309.17500000000007" y1="332.5" x2="309.17500000000007" y2="335.0" stroke="#303030" stroke-width="1" />
<line x1="328.9000000000001" y1="332.5" x2="328.9000000000001" y2="337.0" stroke="#202020" stroke-width="1" />
<line x1="348.6250000000001" y1="332.5" x2="348.6250000000001" y2="335.0" stroke="#303030" stroke-width="1" />
<line x1="368.35000000000014" y1="332.5" x2="368.35000000000014" y2="335.0" stroke="#303030" stroke-width="1" />
<line x1="388.07500000000016" y1="332.5" x2="388.07500000000016" y2="335.0" stroke="#303030" stroke-width="1" />
<line x1="407.8000000000002" y1="332.5" x2="407.8000000000002" y2="337.0" stroke="#202020" stroke-width="1" />
<line x1="427.5250000000002" y1="332.5" x2="427.5250000000002" y2="335.0" stroke="#303030" stroke-width="1" />
<line x1="447.2500000000002" y1="332.5" x2="447.2500000000002" y2="335.0" stroke="#303030" stroke-width="1" />
<line x1="466.97500000000025" y1="332.5" x2="466.97500000000025" y2="335.0" stroke="#303030" stroke-width="1" />
<line x1="486.7000000000003" y1="332.5" x2="486.7000000000003" y2="337.0" stroke="#202020" stroke-width="1" />
<line x1="506.4250000000003" y1="332.5" x2="506.4250000000003" y2="335.0" stroke="#303030" stroke-width="1" />
<line x1="526.1500000000003" y1="332.5" x2="526.1500000000003" y2="335.0" stroke="#303030" stroke-width="1" />
<line x1="545.8750000000003" y1="332.5" x2="545.8750000000003" y2="335.0" stroke="#303030" stroke-width="1" />
<line x1="565.6000000000004" y1="332.5" x2="565.6000000000004" y2="337.0" stroke="#202020" stroke-width="1" />
<line x1="585.3250000000004" y1="332.5" x2="585.3250000000004" y2="335.0" stroke="#303030" stroke-width="1" />
<line x1="605.0500000000004" y1="332.5" x2="605.0500000000004" y2="335.0" stroke="#303030" stroke-width="1" />
<line x1="624.7750000000004" y1="332.5" x2="624.7750000000004" y2="335.0" stroke="#303030" stroke-width="1" />
<line x1="644.5000000000005" y1="332.5" x2="644.5000000000005" y2="337.0" stroke="#202020" stroke-width="1" />
<line x1="664.2250000000005" y1="332.5" x2="664.2250000000005" y2="335.0" stroke="#303030" stroke-width="1" />
<line x1="683.9500000000005" y1="332.5" x2="683.9500000000005" y2="335.0" stroke="#303030" stroke-width="1" />
<line x1="703.6750000000005" y1="332.5" x2="703.6750000000005" y2="335.0" stroke="#303030" stroke-width="1" />
<text x="249.5" y="346.6" font-size="7.8" fill="#303030" text-anchor="middle" font-weight="normal" letter-spacing="0" >13:45:00</text>
<text x="328.4" y="346.6" font-size="7.8" fill="#303030" text-anchor="middle" font-weight="normal" letter-spacing="0" >13:45:30</text>
<text x="407.3" y="346.6" font-size="7.8" fill="#303030" text-anchor="middle" font-weight="normal" letter-spacing="0" >13:46:00</text>
<text x="486.20000000000005" y="346.6" font-size="7.8" fill="#303030" text-anchor="middle" font-weight="normal" letter-spacing="0" >13:46:30</text>
<text x="565.1" y="346.6" font-size="7.8" fill="#303030" text-anchor="middle" font-weight="normal" letter-spacing="0" >13:47:00</text>
<text x="644.0" y="346.6" font-size="7.8" fill="#303030" text-anchor="middle" font-weight="normal" letter-spacing="0" >13:47:30</text>
<text x="484.40000000000003" y="356.3" font-size="7.8" fill="#303030" text-anchor="middle" font-weight="normal" letter-spacing="-0.15" >05 Sep 2012</text>
<text x="476.8" y="103.4" font-size="7.8" fill="#202020" text-anchor="middle" font-weight="normal" letter-spacing="-0.38" >Trends.Sensor11</text>
<defs><clipPath id="pc"><rect x="248.5" y="109.5" width="472.5" height="226.0"/></clipPath></defs>
<g clip-path="url(#pc)">
<path d="M247.17 162.44 L249.80 183.27 L252.43 174.89 L255.05 164.99 L257.68 163.58 L260.30 176.83 L262.93 180.26 L265.56 158.74 L268.18 178.43 L270.81 172.74 L273.43 174.89 L276.06 161.12 L278.69 158.22 L281.31 190.25 L283.94 179.71 L286.56 158.74 L289.19 160.37 L291.82 174.89 L294.44 164.35 L297.07 183.27 L299.69 188.64 L302.32 185.85 L304.95 160.90 L307.57 172.19 L310.20 186.49 L312.82 187.26 L315.45 165.74 L318.08 169.28 L320.70 183.27 L323.33 181.87 L325.95 177.03 L328.58 156.61 L331.21 179.18 L333.83 181.34 L336.46 174.89 L339.08 166.49 L341.71 167.90 L344.34 159.60 L346.96 185.43 L349.59 181.87 L352.21 159.29 L354.84 183.27 L357.47 185.43 L360.09 158.74 L362.72 161.76 L365.34 185.85 L367.97 166.49 L370.60 176.17 L373.22 167.35 L375.85 176.17 L378.47 172.19 L381.10 169.28 L383.73 159.60 L386.35 166.49 L388.98 186.49 L391.60 164.35 L394.23 159.29 L396.86 164.35 L399.48 160.90 L402.11 160.04 L404.73 158.22 L407.36 176.50 L409.99 185.43 L412.61 186.49 L415.24 160.37 L417.86 179.71 L420.49 165.74 L423.12 165.74 L425.74 186.71 L428.37 158.22 L430.99 163.58 L433.62 160.37 L436.25 182.61 L438.87 162.20 L441.50 161.76 L444.12 173.59 L446.75 174.34 L449.38 184.02 L452.00 163.28 L454.63 188.31 L457.25 178.32 L459.88 185.85 L462.51 159.60 L465.13 181.87 L467.76 177.58 L470.38 182.42 L473.01 188.64 L475.64 158.22 L478.26 182.61 L480.89 163.06 L483.51 187.56 L486.14 171.44 L488.77 161.12 L491.39 166.49 L494.02 166.49 L496.64 161.45 L499.27 162.20 L501.90 159.29 L504.52 180.26 L507.15 182.20 L509.77 186.18 L512.40 183.27 L515.03 183.27 L517.65 178.32 L520.28 166.49 L522.90 180.26 L525.53 177.58 L528.16 184.55 L530.78 174.34 L533.41 171.44 L536.03 180.26 L538.66 172.19 L541.29 186.71 L543.91 164.35 L546.54 170.58 L549.16 184.02 L551.79 168.23 L554.42 172.96 L557.04 165.74 L559.67 177.58 L562.29 171.44 L564.92 172.96 L567.55 158.22 L570.17 188.86 L572.80 165.21 L575.42 174.01 L578.05 180.26 L580.68 174.89 L583.30 184.02 L585.93 181.34 L588.55 167.35 L591.18 179.18 L593.81 158.74 L596.43 173.59 L599.06 189.39 L601.68 165.74 L604.31 190.47 L606.94 172.19 L609.56 190.47 L612.19 183.27 L614.81 176.50 L617.44 184.02 L620.07 172.19 L622.69 172.19 L625.32 188.86 L627.94 182.61 L630.57 185.43 L633.20 156.61 L635.82 188.31 L638.45 163.06 L641.07 179.71 L643.70 190.47 L646.33 174.12 L648.95 182.61 L651.58 179.18 L654.20 186.49 L656.83 164.35 L659.46 176.17 L662.08 177.58 L664.71 162.20 L667.33 159.29 L669.96 187.56 L672.59 170.05 L675.21 187.56 L677.84 176.50 L680.46 175.42 L683.09 169.37 L685.72 183.78 L688.34 161.60 L690.97 178.24 L693.59 158.59 L696.22 179.25 L698.85 169.37 L701.47 165.94 L704.10 173.20 L706.72 185.50 L709.35 159.29 L711.98 159.60 L714.60 172.69 L717.23 187.32 L719.85 175.42" stroke="#d6c6d6" stroke-width="1.7" fill="none" stroke-linejoin="round"/>
<path d="M247.17 160.84 L248.77 162.44 L247.17 164.04 L245.57 162.44 Z" fill="#c87878" stroke="#302020" stroke-width="0.7"/>
<path d="M249.80 181.67 L251.40 183.27 L249.80 184.87 L248.20 183.27 Z" fill="#c87878" stroke="#302020" stroke-width="0.7"/>
<path d="M252.43 173.29 L254.03 174.89 L252.43 176.49 L250.83 174.89 Z" fill="#c87878" stroke="#302020" stroke-width="0.7"/>
<path d="M255.05 163.39 L256.65 164.99 L255.05 166.59 L253.45 164.99 Z" fill="#c87878" stroke="#302020" stroke-width="0.7"/>
<path d="M257.68 161.98 L259.28 163.58 L257.68 165.18 L256.08 163.58 Z" fill="#c87878" stroke="#302020" stroke-width="0.7"/>
<path d="M260.30 175.23 L261.90 176.83 L260.30 178.43 L258.70 176.83 Z" fill="#c87878" stroke="#302020" stroke-width="0.7"/>
<path d="M262.93 178.66 L264.53 180.26 L262.93 181.86 L261.33 180.26 Z" fill="#c87878" stroke="#302020" stroke-width="0.7"/>
<path d="M265.56 157.14 L267.16 158.74 L265.56 160.34 L263.96 158.74 Z" fill="#c87878" stroke="#302020" stroke-width="0.7"/>
<path d="M268.18 176.83 L269.78 178.43 L268.18 180.03 L266.58 178.43 Z" fill="#c87878" stroke="#302020" stroke-width="0.7"/>
<path d="M270.81 171.14 L272.41 172.74 L270.81 174.34 L269.21 172.74 Z" fill="#c87878" stroke="#302020" stroke-width="0.7"/>
<path d="M273.43 173.29 L275.03 174.89 L273.43 176.49 L271.83 174.89 Z" fill="#c87878" stroke="#302020" stroke-width="0.7"/>
<path d="M276.06 159.52 L277.66 161.12 L276.06 162.72 L274.46 161.12 Z" fill="#c87878" stroke="#302020" stroke-width="0.7"/>
<path d="M278.69 156.62 L280.29 158.22 L278.69 159.82 L277.09 158.22 Z" fill="#c87878" stroke="#302020" stroke-width="0.7"/>
<path d="M281.31 188.65 L282.91 190.25 L281.31 191.85 L279.71 190.25 Z" fill="#c87878" stroke="#302020" stroke-width="0.7"/>
<path d="M283.94 178.11 L285.54 179.71 L283.94 181.31 L282.34 179.71 Z" fill="#c87878" stroke="#302020" stroke-width="0.7"/>
<path d="M286.56 157.14 L288.16 158.74 L286.56 160.34 L284.96 158.74 Z" fill="#c87878" stroke="#302020" stroke-width="0.7"/>
<path d="M289.19 158.77 L290.79 160.37 L289.19 161.97 L287.59 160.37 Z" fill="#c87878" stroke="#302020" stroke-width="0.7"/>
<path d="M291.82 173.29 L293.42 174.89 L291.82 176.49 L290.22 174.89 Z" fill="#c87878" stroke="#302020" stroke-width="0.7"/>
<path d="M294.44 162.75 L296.04 164.35 L294.44 165.95 L292.84 164.35 Z" fill="#c87878" stroke="#302020" stroke-width="0.7"/>
<path d="M297.07 181.67 L298.67 183.27 L297.07 184.87 L295.47 183.27 Z" fill="#c87878" stroke="#302020" stroke-width="0.7"/>
<path d="M299.69 187.04 L301.29 188.64 L299.69 190.24 L298.09 188.64 Z" fill="#c87878" stroke="#302020" stroke-width="0.7"/>
<path d="M302.32 184.25 L303.92 185.85 L302.32 187.45 L300.72 185.85 Z" fill="#c87878" stroke="#302020" stroke-width="0.7"/>
<path d="M304.95 159.30 L306.55 160.90 L304.95 162.50 L303.35 160.90 Z" fill="#c87878" stroke="#302020" stroke-width="0.7"/>
<path d="M307.57 170.59 L309.17 172.19 L307.57 173.79 L305.97 172.19 Z" fill="#c87878" stroke="#302020" stroke-width="0.7"/>
<path d="M310.20 184.89 L311.80 186.49 L310.20 188.09 L308.60 186.49 Z" fill="#c87878" stroke="#302020" stroke-width="0.7"/>
<path d="M312.82 185.66 L314.42 187.26 L312.82 188.86 L311.22 187.26 Z" fill="#c87878" stroke="#302020" stroke-width="0.7"/>
<path d="M315.45 164.14 L317.05 165.74 L315.45 167.34 L313.85 165.74 Z" fill="#c87878" stroke="#302020" stroke-width="0.7"/>
<path d="M318.08 167.68 L319.68 169.28 L318.08 170.88 L316.48 169.28 Z" fill="#c87878" stroke="#302020" stroke-width="0.7"/>
<path d="M320.70 181.67 L322.30 183.27 L320.70 184.87 L319.10 183.27 Z" fill="#c87878" stroke="#302020" stroke-width="0.7"/>
<path d="M323.33 180.27 L324.93 181.87 L323.33 183.47 L321.73 181.87 Z" fill="#c87878" stroke="#302020" stroke-width="0.7"/>
<path d="M325.95 175.43 L327.55 177.03 L325.95 178.63 L324.35 177.03 Z" fill="#c87878" stroke="#302020" stroke-width="0.7"/>
<path d="M328.58 155.01 L330.18 156.61 L328.58 158.21 L326.98 156.61 Z" fill="#c87878" stroke="#302020" stroke-width="0.7"/>
<path d="M331.21 177.58 L332.81 179.18 L331.21 180.78 L329.61 179.18 Z" fill="#c87878" stroke="#302020" stroke-width="0.7"/>
<path d="M333.83 179.74 L335.43 181.34 L333.83 182.94 L332.23 181.34 Z" fill="#c87878" stroke="#302020" stroke-width="0.7"/>
<path d="M336.46 173.29 L338.06 174.89 L336.46 176.49 L334.86 174.89 Z" fill="#c87878" stroke="#302020" stroke-width="0.7"/>
<path d="M339.08 164.89 L340.68 166.49 L339.08 168.09 L337.48 166.49 Z" fill="#c87878" stroke="#302020" stroke-width="0.7"/>
<path d="M341.71 166.30 L343.31 167.90 L341.71 169.50 L340.11 167.90 Z" fill="#c87878" stroke="#302020" stroke-width="0.7"/>
<path d="M344.34 158.00 L345.94 159.60 L344.34 161.20 L342.74 159.60 Z" fill="#c87878" stroke="#302020" stroke-width="0.7"/>
<path d="M346.96 183.83 L348.56 185.43 L346.96 187.03 L345.36 185.43 Z" fill="#c87878" stroke="#302020" stroke-width="0.7"/>
<path d="M349.59 180.27 L351.19 181.87 L349.59 183.47 L347.99 181.87 Z" fill="#c87878" stroke="#302020" stroke-width="0.7"/>
<path d="M352.21 157.69 L353.81 159.29 L352.21 160.89 L350.61 159.29 Z" fill="#c87878" stroke="#302020" stroke-width="0.7"/>
<path d="M354.84 181.67 L356.44 183.27 L354.84 184.87 L353.24 183.27 Z" fill="#c87878" stroke="#302020" stroke-width="0.7"/>
<path d="M357.47 183.83 L359.07 185.43 L357.47 187.03 L355.87 185.43 Z" fill="#c87878" stroke="#302020" stroke-width="0.7"/>
<path d="M360.09 157.14 L361.69 158.74 L360.09 160.34 L358.49 158.74 Z" fill="#c87878" stroke="#302020" stroke-width="0.7"/>
<path d="M362.72 160.16 L364.32 161.76 L362.72 163.36 L361.12 161.76 Z" fill="#c87878" stroke="#302020" stroke-width="0.7"/>
<path d="M365.34 184.25 L366.94 185.85 L365.34 187.45 L363.74 185.85 Z" fill="#c87878" stroke="#302020" stroke-width="0.7"/>
<path d="M367.97 164.89 L369.57 166.49 L367.97 168.09 L366.37 166.49 Z" fill="#c87878" stroke="#302020" stroke-width="0.7"/>
<path d="M370.60 174.57 L372.20 176.17 L370.60 177.77 L369.00 176.17 Z" fill="#c87878" stroke="#302020" stroke-width="0.7"/>
<path d="M373.22 165.75 L374.82 167.35 L373.22 168.95 L371.62 167.35 Z" fill="#c87878" stroke="#302020" stroke-width="0.7"/>
<path d="M375.85 174.57 L377.45 176.17 L375.85 177.77 L374.25 176.17 Z" fill="#c87878" stroke="#302020" stroke-width="0.7"/>
<path d="M378.47 170.59 L380.07 172.19 L378.47 173.79 L376.87 172.19 Z" fill="#c87878" stroke="#302020" stroke-width="0.7"/>
<path d="M381.10 167.68 L382.70 169.28 L381.10 170.88 L379.50 169.28 Z" fill="#c87878" stroke="#302020" stroke-width="0.7"/>
<path d="M383.73 158.00 L385.33 159.60 L383.73 161.20 L382.13 159.60 Z" fill="#c87878" stroke="#302020" stroke-width="0.7"/>
<path d="M386.35 164.89 L387.95 166.49 L386.35 168.09 L384.75 166.49 Z" fill="#c87878" stroke="#302020" stroke-width="0.7"/>
<path d="M388.98 184.89 L390.58 186.49 L388.98 188.09 L387.38 186.49 Z" fill="#c87878" stroke="#302020" stroke-width="0.7"/>
<path d="M391.60 162.75 L393.20 164.35 L391.60 165.95 L390.00 164.35 Z" fill="#c87878" stroke="#302020" stroke-width="0.7"/>
<path d="M394.23 157.69 L395.83 159.29 L394.23 160.89 L392.63 159.29 Z" fill="#c87878" stroke="#302020" stroke-width="0.7"/>
<path d="M396.86 162.75 L398.46 164.35 L396.86 165.95 L395.26 164.35 Z" fill="#c87878" stroke="#302020" stroke-width="0.7"/>
<path d="M399.48 159.30 L401.08 160.90 L399.48 162.50 L397.88 160.90 Z" fill="#c87878" stroke="#302020" stroke-width="0.7"/>
<path d="M402.11 158.44 L403.71 160.04 L402.11 161.64 L400.51 160.04 Z" fill="#c87878" stroke="#302020" stroke-width="0.7"/>
<path d="M404.73 156.62 L406.33 158.22 L404.73 159.82 L403.13 158.22 Z" fill="#c87878" stroke="#302020" stroke-width="0.7"/>
<path d="M407.36 174.90 L408.96 176.50 L407.36 178.10 L405.76 176.50 Z" fill="#c87878" stroke="#302020" stroke-width="0.7"/>
<path d="M409.99 183.83 L411.59 185.43 L409.99 187.03 L408.39 185.43 Z" fill="#c87878" stroke="#302020" stroke-width="0.7"/>
<path d="M412.61 184.89 L414.21 186.49 L412.61 188.09 L411.01 186.49 Z" fill="#c87878" stroke="#302020" stroke-width="0.7"/>
<path d="M415.24 158.77 L416.84 160.37 L415.24 161.97 L413.64 160.37 Z" fill="#c87878" stroke="#302020" stroke-width="0.7"/>
<path d="M417.86 178.11 L419.46 179.71 L417.86 181.31 L416.26 179.71 Z" fill="#c87878" stroke="#302020" stroke-width="0.7"/>
<path d="M420.49 164.14 L422.09 165.74 L420.49 167.34 L418.89 165.74 Z" fill="#c87878" stroke="#302020" stroke-width="0.7"/>
<path d="M423.12 164.14 L424.72 165.74 L423.12 167.34 L421.52 165.74 Z" fill="#c87878" stroke="#302020" stroke-width="0.7"/>
<path d="M425.74 185.11 L427.34 186.71 L425.74 188.31 L424.14 186.71 Z" fill="#c87878" stroke="#302020" stroke-width="0.7"/>
<path d="M428.37 156.62 L429.97 158.22 L428.37 159.82 L426.77 158.22 Z" fill="#c87878" stroke="#302020" stroke-width="0.7"/>
<path d="M430.99 161.98 L432.59 163.58 L430.99 165.18 L429.39 163.58 Z" fill="#c87878" stroke="#302020" stroke-width="0.7"/>
<path d="M433.62 158.77 L435.22 160.37 L433.62 161.97 L432.02 160.37 Z" fill="#c87878" stroke="#302020" stroke-width="0.7"/>
<path d="M436.25 181.01 L437.85 182.61 L436.25 184.21 L434.65 182.61 Z" fill="#c87878" stroke="#302020" stroke-width="0.7"/>
<path d="M438.87 160.60 L440.47 162.20 L438.87 163.80 L437.27 162.20 Z" fill="#c87878" stroke="#302020" stroke-width="0.7"/>
<path d="M441.50 160.16 L443.10 161.76 L441.50 163.36 L439.90 161.76 Z" fill="#c87878" stroke="#302020" stroke-width="0.7"/>
<path d="M444.12 171.99 L445.72 173.59 L444.12 175.19 L442.52 173.59 Z" fill="#c87878" stroke="#302020" stroke-width="0.7"/>
<path d="M446.75 172.74 L448.35 174.34 L446.75 175.94 L445.15 174.34 Z" fill="#c87878" stroke="#302020" stroke-width="0.7"/>
<path d="M449.38 182.42 L450.98 184.02 L449.38 185.62 L447.78 184.02 Z" fill="#c87878" stroke="#302020" stroke-width="0.7"/>
<path d="M452.00 161.68 L453.60 163.28 L452.00 164.88 L450.40 163.28 Z" fill="#c87878" stroke="#302020" stroke-width="0.7"/>
<path d="M454.63 186.71 L456.23 188.31 L454.63 189.91 L453.03 188.31 Z" fill="#c87878" stroke="#302020" stroke-width="0.7"/>
<path d="M457.25 176.72 L458.85 178.32 L457.25 179.92 L455.65 178.32 Z" fill="#c87878" stroke="#302020" stroke-width="0.7"/>
<path d="M459.88 184.25 L461.48 185.85 L459.88 187.45 L458.28 185.85 Z" fill="#c87878" stroke="#302020" stroke-width="0.7"/>
<path d="M462.51 158.00 L464.11 159.60 L462.51 161.20 L460.91 159.60 Z" fill="#c87878" stroke="#302020" stroke-width="0.7"/>
<path d="M465.13 180.27 L466.73 181.87 L465.13 183.47 L463.53 181.87 Z" fill="#c87878" stroke="#302020" stroke-width="0.7"/>
<path d="M467.76 175.98 L469.36 177.58 L467.76 179.18 L466.16 177.58 Z" fill="#c87878" stroke="#302020" stroke-width="0.7"/>
<path d="M470.38 180.82 L471.98 182.42 L470.38 184.02 L468.78 182.42 Z" fill="#c87878" stroke="#302020" stroke-width="0.7"/>
<path d="M473.01 187.04 L474.61 188.64 L473.01 190.24 L471.41 188.64 Z" fill="#c87878" stroke="#302020" stroke-width="0.7"/>
<path d="M475.64 156.62 L477.24 158.22 L475.64 159.82 L474.04 158.22 Z" fill="#c87878" stroke="#302020" stroke-width="0.7"/>
<path d="M478.26 181.01 L479.86 182.61 L478.26 184.21 L476.66 182.61 Z" fill="#c87878" stroke="#302020" stroke-width="0.7"/>
<path d="M480.89 161.46 L482.49 163.06 L480.89 164.66 L479.29 163.06 Z" fill="#c87878" stroke="#302020" stroke-width="0.7"/>
<path d="M483.51 185.96 L485.11 187.56 L483.51 189.16 L481.91 187.56 Z" fill="#c87878" stroke="#302020" stroke-width="0.7"/>
<path d="M486.14 169.84 L487.74 171.44 L486.14 173.04 L484.54 171.44 Z" fill="#c87878" stroke="#302020" stroke-width="0.7"/>
<path d="M488.77 159.52 L490.37 161.12 L488.77 162.72 L487.17 161.12 Z" fill="#c87878" stroke="#302020" stroke-width="0.7"/>
<path d="M491.39 164.89 L492.99 166.49 L491.39 168.09 L489.79 166.49 Z" fill="#c87878" stroke="#302020" stroke-width="0.7"/>
<path d="M494.02 164.89 L495.62 166.49 L494.02 168.09 L492.42 166.49 Z" fill="#c87878" stroke="#302020" stroke-width="0.7"/>
<path d="M496.64 159.85 L498.24 161.45 L496.64 163.05 L495.04 161.45 Z" fill="#c87878" stroke="#302020" stroke-width="0.7"/>
<path d="M499.27 160.60 L500.87 162.20 L499.27 163.80 L497.67 162.20 Z" fill="#c87878" stroke="#302020" stroke-width="0.7"/>
<path d="M501.90 157.69 L503.50 159.29 L501.90 160.89 L500.30 159.29 Z" fill="#c87878" stroke="#302020" stroke-width="0.7"/>
<path d="M504.52 178.66 L506.12 180.26 L504.52 181.86 L502.92 180.26 Z" fill="#c87878" stroke="#302020" stroke-width="0.7"/>
<path d="M507.15 180.60 L508.75 182.20 L507.15 183.80 L505.55 182.20 Z" fill="#c87878" stroke="#302020" stroke-width="0.7"/>
<path d="M509.77 184.58 L511.37 186.18 L509.77 187.78 L508.17 186.18 Z" fill="#c87878" stroke="#302020" stroke-width="0.7"/>
<path d="M512.40 181.67 L514.00 183.27 L512.40 184.87 L510.80 183.27 Z" fill="#c87878" stroke="#302020" stroke-width="0.7"/>
<path d="M515.03 181.67 L516.63 183.27 L515.03 184.87 L513.43 183.27 Z" fill="#c87878" stroke="#302020" stroke-width="0.7"/>
<path d="M517.65 176.72 L519.25 178.32 L517.65 179.92 L516.05 178.32 Z" fill="#c87878" stroke="#302020" stroke-width="0.7"/>
<path d="M520.28 164.89 L521.88 166.49 L520.28 168.09 L518.68 166.49 Z" fill="#c87878" stroke="#302020" stroke-width="0.7"/>
<path d="M522.90 178.66 L524.50 180.26 L522.90 181.86 L521.30 180.26 Z" fill="#c87878" stroke="#302020" stroke-width="0.7"/>
<path d="M525.53 175.98 L527.13 177.58 L525.53 179.18 L523.93 177.58 Z" fill="#c87878" stroke="#302020" stroke-width="0.7"/>
<path d="M528.16 182.95 L529.76 184.55 L528.16 186.15 L526.56 184.55 Z" fill="#c87878" stroke="#302020" stroke-width="0.7"/>
<path d="M530.78 172.74 L532.38 174.34 L530.78 175.94 L529.18 174.34 Z" fill="#c87878" stroke="#302020" stroke-width="0.7"/>
<path d="M533.41 169.84 L535.01 171.44 L533.41 173.04 L531.81 171.44 Z" fill="#c87878" stroke="#302020" stroke-width="0.7"/>
<path d="M536.03 178.66 L537.63 180.26 L536.03 181.86 L534.43 180.26 Z" fill="#c87878" stroke="#302020" stroke-width="0.7"/>
<path d="M538.66 170.59 L540.26 172.19 L538.66 173.79 L537.06 172.19 Z" fill="#c87878" stroke="#302020" stroke-width="0.7"/>
<path d="M541.29 185.11 L542.89 186.71 L541.29 188.31 L539.69 186.71 Z" fill="#c87878" stroke="#302020" stroke-width="0.7"/>
<path d="M543.91 162.75 L545.51 164.35 L543.91 165.95 L542.31 164.35 Z" fill="#c87878" stroke="#302020" stroke-width="0.7"/>
<path d="M546.54 168.98 L548.14 170.58 L546.54 172.18 L544.94 170.58 Z" fill="#c87878" stroke="#302020" stroke-width="0.7"/>
<path d="M549.16 182.42 L550.76 184.02 L549.16 185.62 L547.56 184.02 Z" fill="#c87878" stroke="#302020" stroke-width="0.7"/>
<path d="M551.79 166.63 L553.39 168.23 L551.79 169.83 L550.19 168.23 Z" fill="#c87878" stroke="#302020" stroke-width="0.7"/>
<path d="M554.42 171.36 L556.02 172.96 L554.42 174.56 L552.82 172.96 Z" fill="#c87878" stroke="#302020" stroke-width="0.7"/>
<path d="M557.04 164.14 L558.64 165.74 L557.04 167.34 L555.44 165.74 Z" fill="#c87878" stroke="#302020" stroke-width="0.7"/>
<path d="M559.67 175.98 L561.27 177.58 L559.67 179.18 L558.07 177.58 Z" fill="#c87878" stroke="#302020" stroke-width="0.7"/>
<path d="M562.29 169.84 L563.89 171.44 L562.29 173.04 L560.69 171.44 Z" fill="#c87878" stroke="#302020" stroke-width="0.7"/>
<path d="M564.92 171.36 L566.52 172.96 L564.92 174.56 L563.32 172.96 Z" fill="#c87878" stroke="#302020" stroke-width="0.7"/>
<path d="M567.55 156.62 L569.15 158.22 L567.55 159.82 L565.95 158.22 Z" fill="#c87878" stroke="#302020" stroke-width="0.7"/>
<path d="M570.17 187.26 L571.77 188.86 L570.17 190.46 L568.57 188.86 Z" fill="#c87878" stroke="#302020" stroke-width="0.7"/>
<path d="M572.80 163.61 L574.40 165.21 L572.80 166.81 L571.20 165.21 Z" fill="#c87878" stroke="#302020" stroke-width="0.7"/>
<path d="M575.42 172.41 L577.02 174.01 L575.42 175.61 L573.82 174.01 Z" fill="#c87878" stroke="#302020" stroke-width="0.7"/>
<path d="M578.05 178.66 L579.65 180.26 L578.05 181.86 L576.45 180.26 Z" fill="#c87878" stroke="#302020" stroke-width="0.7"/>
<path d="M580.68 173.29 L582.28 174.89 L580.68 176.49 L579.08 174.89 Z" fill="#c87878" stroke="#302020" stroke-width="0.7"/>
<path d="M583.30 182.42 L584.90 184.02 L583.30 185.62 L581.70 184.02 Z" fill="#c87878" stroke="#302020" stroke-width="0.7"/>
<path d="M585.93 179.74 L587.53 181.34 L585.93 182.94 L584.33 181.34 Z" fill="#c87878" stroke="#302020" stroke-width="0.7"/>
<path d="M588.55 165.75 L590.15 167.35 L588.55 168.95 L586.95 167.35 Z" fill="#c87878" stroke="#302020" stroke-width="0.7"/>
<path d="M591.18 177.58 L592.78 179.18 L591.18 180.78 L589.58 179.18 Z" fill="#c87878" stroke="#302020" stroke-width="0.7"/>
<path d="M593.81 157.14 L595.41 158.74 L593.81 160.34 L592.21 158.74 Z" fill="#c87878" stroke="#302020" stroke-width="0.7"/>
<path d="M596.43 171.99 L598.03 173.59 L596.43 175.19 L594.83 173.59 Z" fill="#c87878" stroke="#302020" stroke-width="0.7"/>
<path d="M599.06 187.79 L600.66 189.39 L599.06 190.99 L597.46 189.39 Z" fill="#c87878" stroke="#302020" stroke-width="0.7"/>
<path d="M601.68 164.14 L603.28 165.74 L601.68 167.34 L600.08 165.74 Z" fill="#c87878" stroke="#302020" stroke-width="0.7"/>
<path d="M604.31 188.87 L605.91 190.47 L604.31 192.07 L602.71 190.47 Z" fill="#c87878" stroke="#302020" stroke-width="0.7"/>
<path d="M606.94 170.59 L608.54 172.19 L606.94 173.79 L605.34 172.19 Z" fill="#c87878" stroke="#302020" stroke-width="0.7"/>
<path d="M609.56 188.87 L611.16 190.47 L609.56 192.07 L607.96 190.47 Z" fill="#c87878" stroke="#302020" stroke-width="0.7"/>
<path d="M612.19 181.67 L613.79 183.27 L612.19 184.87 L610.59 183.27 Z" fill="#c87878" stroke="#302020" stroke-width="0.7"/>
<path d="M614.81 174.90 L616.41 176.50 L614.81 178.10 L613.21 176.50 Z" fill="#c87878" stroke="#302020" stroke-width="0.7"/>
<path d="M617.44 182.42 L619.04 184.02 L617.44 185.62 L615.84 184.02 Z" fill="#c87878" stroke="#302020" stroke-width="0.7"/>
<path d="M620.07 170.59 L621.67 172.19 L620.07 173.79 L618.47 172.19 Z" fill="#c87878" stroke="#302020" stroke-width="0.7"/>
<path d="M622.69 170.59 L624.29 172.19 L622.69 173.79 L621.09 172.19 Z" fill="#c87878" stroke="#302020" stroke-width="0.7"/>
<path d="M625.32 187.26 L626.92 188.86 L625.32 190.46 L623.72 188.86 Z" fill="#c87878" stroke="#302020" stroke-width="0.7"/>
<path d="M627.94 181.01 L629.54 182.61 L627.94 184.21 L626.34 182.61 Z" fill="#c87878" stroke="#302020" stroke-width="0.7"/>
<path d="M630.57 183.83 L632.17 185.43 L630.57 187.03 L628.97 185.43 Z" fill="#c87878" stroke="#302020" stroke-width="0.7"/>
<path d="M633.20 155.01 L634.80 156.61 L633.20 158.21 L631.60 156.61 Z" fill="#c87878" stroke="#302020" stroke-width="0.7"/>
<path d="M635.82 186.71 L637.42 188.31 L635.82 189.91 L634.22 188.31 Z" fill="#c87878" stroke="#302020" stroke-width="0.7"/>
<path d="M638.45 161.46 L640.05 163.06 L638.45 164.66 L636.85 163.06 Z" fill="#c87878" stroke="#302020" stroke-width="0.7"/>
<path d="M641.07 178.11 L642.67 179.71 L641.07 181.31 L639.47 179.71 Z" fill="#c87878" stroke="#302020" stroke-width="0.7"/>
<path d="M643.70 188.87 L645.30 190.47 L643.70 192.07 L642.10 190.47 Z" fill="#c87878" stroke="#302020" stroke-width="0.7"/>
<path d="M646.33 172.52 L647.93 174.12 L646.33 175.72 L644.73 174.12 Z" fill="#c87878" stroke="#302020" stroke-width="0.7"/>
<path d="M648.95 181.01 L650.55 182.61 L648.95 184.21 L647.35 182.61 Z" fill="#c87878" stroke="#302020" stroke-width="0.7"/>
<path d="M651.58 177.58 L653.18 179.18 L651.58 180.78 L649.98 179.18 Z" fill="#c87878" stroke="#302020" stroke-width="0.7"/>
<path d="M654.20 184.89 L655.80 186.49 L654.20 188.09 L652.60 186.49 Z" fill="#c87878" stroke="#302020" stroke-width="0.7"/>
<path d="M656.83 162.75 L658.43 164.35 L656.83 165.95 L655.23 164.35 Z" fill="#c87878" stroke="#302020" stroke-width="0.7"/>
<path d="M659.46 174.57 L661.06 176.17 L659.46 177.77 L657.86 176.17 Z" fill="#c87878" stroke="#302020" stroke-width="0.7"/>
<path d="M662.08 175.98 L663.68 177.58 L662.08 179.18 L660.48 177.58 Z" fill="#c87878" stroke="#302020" stroke-width="0.7"/>
<path d="M664.71 160.60 L666.31 162.20 L664.71 163.80 L663.11 162.20 Z" fill="#c87878" stroke="#302020" stroke-width="0.7"/>
<path d="M667.33 157.69 L668.93 159.29 L667.33 160.89 L665.73 159.29 Z" fill="#c87878" stroke="#302020" stroke-width="0.7"/>
<path d="M669.96 185.96 L671.56 187.56 L669.96 189.16 L668.36 187.56 Z" fill="#c87878" stroke="#302020" stroke-width="0.7"/>
<path d="M672.59 168.45 L674.19 170.05 L672.59 171.65 L670.99 170.05 Z" fill="#c87878" stroke="#302020" stroke-width="0.7"/>
<path d="M675.21 185.96 L676.81 187.56 L675.21 189.16 L673.61 187.56 Z" fill="#c87878" stroke="#302020" stroke-width="0.7"/>
<path d="M677.84 174.90 L679.44 176.50 L677.84 178.10 L676.24 176.50 Z" fill="#c87878" stroke="#302020" stroke-width="0.7"/>
<path d="M680.46 173.82 L682.06 175.42 L680.46 177.02 L678.86 175.42 Z" fill="#c87878" stroke="#302020" stroke-width="0.7"/>
<path d="M683.09 167.77 L684.69 169.37 L683.09 170.97 L681.49 169.37 Z" fill="#c87878" stroke="#302020" stroke-width="0.7"/>
<path d="M685.72 182.18 L687.32 183.78 L685.72 185.38 L684.12 183.78 Z" fill="#c87878" stroke="#302020" stroke-width="0.7"/>
<path d="M688.34 160.00 L689.94 161.60 L688.34 163.20 L686.74 161.60 Z" fill="#c87878" stroke="#302020" stroke-width="0.7"/>
<path d="M690.97 176.64 L692.57 178.24 L690.97 179.84 L689.37 178.24 Z" fill="#c87878" stroke="#302020" stroke-width="0.7"/>
<path d="M693.59 156.99 L695.19 158.59 L693.59 160.19 L691.99 158.59 Z" fill="#c87878" stroke="#302020" stroke-width="0.7"/>
<path d="M696.22 177.65 L697.82 179.25 L696.22 180.85 L694.62 179.25 Z" fill="#c87878" stroke="#302020" stroke-width="0.7"/>
<path d="M698.85 167.77 L700.45 169.37 L698.85 170.97 L697.25 169.37 Z" fill="#c87878" stroke="#302020" stroke-width="0.7"/>
<path d="M701.47 164.34 L703.07 165.94 L701.47 167.54 L699.87 165.94 Z" fill="#c87878" stroke="#302020" stroke-width="0.7"/>
<path d="M704.10 171.60 L705.70 173.20 L704.10 174.80 L702.50 173.20 Z" fill="#c87878" stroke="#302020" stroke-width="0.7"/>
<path d="M706.72 183.90 L708.32 185.50 L706.72 187.10 L705.12 185.50 Z" fill="#c87878" stroke="#302020" stroke-width="0.7"/>
<path d="M709.35 157.69 L710.95 159.29 L709.35 160.89 L707.75 159.29 Z" fill="#c87878" stroke="#302020" stroke-width="0.7"/>
<path d="M711.98 158.00 L713.58 159.60 L711.98 161.20 L710.38 159.60 Z" fill="#c87878" stroke="#302020" stroke-width="0.7"/>
<path d="M714.60 171.09 L716.20 172.69 L714.60 174.29 L713.00 172.69 Z" fill="#c87878" stroke="#302020" stroke-width="0.7"/>
<path d="M717.23 185.72 L718.83 187.32 L717.23 188.92 L715.63 187.32 Z" fill="#c87878" stroke="#302020" stroke-width="0.7"/>
<path d="M719.85 173.82 L721.45 175.42 L719.85 177.02 L718.25 175.42 Z" fill="#c87878" stroke="#302020" stroke-width="0.7"/>
<path d="M247.17 272.44 L249.80 261.00 L252.43 272.48 L255.05 275.39 L257.68 267.12 L260.30 276.80 L262.93 260.67 L265.56 258.51 L268.18 267.86 L270.81 266.37 L273.43 267.12 L276.06 270.35 L278.69 269.80 L281.31 271.43 L283.94 267.86 L286.56 260.12 L289.19 256.05 L291.82 262.28 L294.44 270.35 L297.07 269.27 L299.69 274.97 L302.32 266.37 L304.95 274.11 L307.57 265.51 L310.20 267.12 L312.82 262.28 L315.45 256.05 L318.08 261.20 L320.70 262.28 L323.33 258.51 L325.95 258.51 L328.58 257.99 L331.21 271.43 L333.83 268.52 L336.46 265.73 L339.08 274.11 L341.71 261.42 L344.34 266.37 L346.96 256.36 L349.59 271.43 L352.21 258.84 L354.84 273.25 L357.47 257.77 L360.09 272.81 L362.72 277.54 L365.34 275.39 L367.97 275.39 L370.60 268.52 L373.22 265.51 L375.85 275.39 L378.47 266.37 L381.10 257.77 L383.73 269.27 L386.35 274.97 L388.98 267.12 L391.60 263.13 L394.23 259.26 L396.86 276.05 L399.48 269.27 L402.11 276.80 L404.73 277.87 L407.36 267.86 L409.99 274.97 L412.61 257.99 L415.24 256.36 L417.86 257.44 L420.49 264.21 L423.12 265.73 L425.74 271.43 L428.37 256.05 L430.99 260.67 L433.62 274.33 L436.25 258.84 L438.87 259.59 L441.50 264.21 L444.12 274.97 L446.75 270.35 L449.38 261.42 L452.00 267.12 L454.63 274.97 L457.25 266.37 L459.88 272.48 L462.51 268.52 L465.13 261.42 L467.76 267.12 L470.38 265.51 L473.01 261.42 L475.64 276.80 L478.26 277.13 L480.89 273.25 L483.51 272.18 L486.14 263.57 L488.77 277.54 L491.39 269.80 L494.02 275.39 L496.64 267.86 L499.27 257.44 L501.90 269.27 L504.52 276.80 L507.15 272.18 L509.77 274.33 L512.40 272.81 L515.03 257.44 L517.65 260.34 L520.28 263.13 L522.90 261.00 L525.53 264.21 L528.16 261.42 L530.78 257.99 L533.41 265.29 L536.03 272.18 L538.66 260.34 L541.29 274.97 L543.91 258.84 L546.54 269.27 L549.16 270.02 L551.79 259.59 L554.42 265.29 L557.04 272.18 L559.67 263.57 L562.29 256.05 L564.92 275.72 L567.55 273.25 L570.17 268.52 L572.80 258.84 L575.42 272.81 L578.05 271.43 L580.68 276.80 L583.30 258.84 L585.93 272.81 L588.55 267.86 L591.18 269.60 L593.81 275.39 L596.43 258.84 L599.06 273.25 L601.68 256.05 L604.31 273.25 L606.94 269.80 L609.56 272.81 L612.19 272.18 L614.81 261.42 L617.44 271.43 L620.07 269.80 L622.69 256.05 L625.32 267.12 L627.94 267.86 L630.57 257.44 L633.20 271.43 L635.82 267.86 L638.45 267.86 L641.07 274.33 L643.70 263.57 L646.33 276.80 L648.95 258.84 L651.58 269.80 L654.20 274.97 L656.83 274.33 L659.46 257.99 L662.08 261.00 L664.71 261.42 L667.33 267.12 L669.96 262.50 L672.59 267.12 L675.21 265.29 L677.84 263.13 L680.46 268.44 L683.09 256.34 L685.72 272.07 L688.34 269.23 L690.97 274.77 L693.59 274.77 L696.22 265.00 L698.85 274.27 L701.47 271.25 L704.10 260.67 L706.72 261.37 L709.35 274.77 L711.98 276.80 L714.60 268.44 L717.23 257.94 L719.85 257.35" stroke="#f3dca0" stroke-width="1.7" fill="none" stroke-linejoin="round"/>
<path d="M247.17 270.84 L248.77 272.44 L247.17 274.04 L245.57 272.44 Z" fill="#c87850" stroke="#403020" stroke-width="0.7"/>
<path d="M249.80 259.40 L251.40 261.00 L249.80 262.60 L248.20 261.00 Z" fill="#c87850" stroke="#403020" stroke-width="0.7"/>
<path d="M252.43 270.88 L254.03 272.48 L252.43 274.08 L250.83 272.48 Z" fill="#c87850" stroke="#403020" stroke-width="0.7"/>
<path d="M255.05 273.79 L256.65 275.39 L255.05 276.99 L253.45 275.39 Z" fill="#c87850" stroke="#403020" stroke-width="0.7"/>
<path d="M257.68 265.52 L259.28 267.12 L257.68 268.72 L256.08 267.12 Z" fill="#c87850" stroke="#403020" stroke-width="0.7"/>
<path d="M260.30 275.20 L261.90 276.80 L260.30 278.40 L258.70 276.80 Z" fill="#c87850" stroke="#403020" stroke-width="0.7"/>
<path d="M262.93 259.07 L264.53 260.67 L262.93 262.27 L261.33 260.67 Z" fill="#c87850" stroke="#403020" stroke-width="0.7"/>
<path d="M265.56 256.91 L267.16 258.51 L265.56 260.11 L263.96 258.51 Z" fill="#c87850" stroke="#403020" stroke-width="0.7"/>
<path d="M268.18 266.26 L269.78 267.86 L268.18 269.46 L266.58 267.86 Z" fill="#c87850" stroke="#403020" stroke-width="0.7"/>
<path d="M270.81 264.77 L272.41 266.37 L270.81 267.97 L269.21 266.37 Z" fill="#c87850" stroke="#403020" stroke-width="0.7"/>
<path d="M273.43 265.52 L275.03 267.12 L273.43 268.72 L271.83 267.12 Z" fill="#c87850" stroke="#403020" stroke-width="0.7"/>
<path d="M276.06 268.75 L277.66 270.35 L276.06 271.95 L274.46 270.35 Z" fill="#c87850" stroke="#403020" stroke-width="0.7"/>
<path d="M278.69 268.20 L280.29 269.80 L278.69 271.40 L277.09 269.80 Z" fill="#c87850" stroke="#403020" stroke-width="0.7"/>
<path d="M281.31 269.83 L282.91 271.43 L281.31 273.03 L279.71 271.43 Z" fill="#c87850" stroke="#403020" stroke-width="0.7"/>
<path d="M283.94 266.26 L285.54 267.86 L283.94 269.46 L282.34 267.86 Z" fill="#c87850" stroke="#403020" stroke-width="0.7"/>
<path d="M286.56 258.52 L288.16 260.12 L286.56 261.72 L284.96 260.12 Z" fill="#c87850" stroke="#403020" stroke-width="0.7"/>
<path d="M289.19 254.45 L290.79 256.05 L289.19 257.65 L287.59 256.05 Z" fill="#c87850" stroke="#403020" stroke-width="0.7"/>
<path d="M291.82 260.68 L293.42 262.28 L291.82 263.88 L290.22 262.28 Z" fill="#c87850" stroke="#403020" stroke-width="0.7"/>
<path d="M294.44 268.75 L296.04 270.35 L294.44 271.95 L292.84 270.35 Z" fill="#c87850" stroke="#403020" stroke-width="0.7"/>
<path d="M297.07 267.67 L298.67 269.27 L297.07 270.87 L295.47 269.27 Z" fill="#c87850" stroke="#403020" stroke-width="0.7"/>
<path d="M299.69 273.37 L301.29 274.97 L299.69 276.57 L298.09 274.97 Z" fill="#c87850" stroke="#403020" stroke-width="0.7"/>
<path d="M302.32 264.77 L303.92 266.37 L302.32 267.97 L300.72 266.37 Z" fill="#c87850" stroke="#403020" stroke-width="0.7"/>
<path d="M304.95 272.51 L306.55 274.11 L304.95 275.71 L303.35 274.11 Z" fill="#c87850" stroke="#403020" stroke-width="0.7"/>
<path d="M307.57 263.91 L309.17 265.51 L307.57 267.11 L305.97 265.51 Z" fill="#c87850" stroke="#403020" stroke-width="0.7"/>
<path d="M310.20 265.52 L311.80 267.12 L310.20 268.72 L308.60 267.12 Z" fill="#c87850" stroke="#403020" stroke-width="0.7"/>
<path d="M312.82 260.68 L314.42 262.28 L312.82 263.88 L311.22 262.28 Z" fill="#c87850" stroke="#403020" stroke-width="0.7"/>
<path d="M315.45 254.45 L317.05 256.05 L315.45 257.65 L313.85 256.05 Z" fill="#c87850" stroke="#403020" stroke-width="0.7"/>
<path d="M318.08 259.60 L319.68 261.20 L318.08 262.80 L316.48 261.20 Z" fill="#c87850" stroke="#403020" stroke-width="0.7"/>
<path d="M320.70 260.68 L322.30 262.28 L320.70 263.88 L319.10 262.28 Z" fill="#c87850" stroke="#403020" stroke-width="0.7"/>
<path d="M323.33 256.91 L324.93 258.51 L323.33 260.11 L321.73 258.51 Z" fill="#c87850" stroke="#403020" stroke-width="0.7"/>
<path d="M325.95 256.91 L327.55 258.51 L325.95 260.11 L324.35 258.51 Z" fill="#c87850" stroke="#403020" stroke-width="0.7"/>
<path d="M328.58 256.39 L330.18 257.99 L328.58 259.59 L326.98 257.99 Z" fill="#c87850" stroke="#403020" stroke-width="0.7"/>
<path d="M331.21 269.83 L332.81 271.43 L331.21 273.03 L329.61 271.43 Z" fill="#c87850" stroke="#403020" stroke-width="0.7"/>
<path d="M333.83 266.92 L335.43 268.52 L333.83 270.12 L332.23 268.52 Z" fill="#c87850" stroke="#403020" stroke-width="0.7"/>
<path d="M336.46 264.13 L338.06 265.73 L336.46 267.33 L334.86 265.73 Z" fill="#c87850" stroke="#403020" stroke-width="0.7"/>
<path d="M339.08 272.51 L340.68 274.11 L339.08 275.71 L337.48 274.11 Z" fill="#c87850" stroke="#403020" stroke-width="0.7"/>
<path d="M341.71 259.82 L343.31 261.42 L341.71 263.02 L340.11 261.42 Z" fill="#c87850" stroke="#403020" stroke-width="0.7"/>
<path d="M344.34 264.77 L345.94 266.37 L344.34 267.97 L342.74 266.37 Z" fill="#c87850" stroke="#403020" stroke-width="0.7"/>
<path d="M346.96 254.76 L348.56 256.36 L346.96 257.96 L345.36 256.36 Z" fill="#c87850" stroke="#403020" stroke-width="0.7"/>
<path d="M349.59 269.83 L351.19 271.43 L349.59 273.03 L347.99 271.43 Z" fill="#c87850" stroke="#403020" stroke-width="0.7"/>
<path d="M352.21 257.24 L353.81 258.84 L352.21 260.44 L350.61 258.84 Z" fill="#c87850" stroke="#403020" stroke-width="0.7"/>
<path d="M354.84 271.65 L356.44 273.25 L354.84 274.85 L353.24 273.25 Z" fill="#c87850" stroke="#403020" stroke-width="0.7"/>
<path d="M357.47 256.17 L359.07 257.77 L357.47 259.37 L355.87 257.77 Z" fill="#c87850" stroke="#403020" stroke-width="0.7"/>
<path d="M360.09 271.21 L361.69 272.81 L360.09 274.41 L358.49 272.81 Z" fill="#c87850" stroke="#403020" stroke-width="0.7"/>
<path d="M362.72 275.94 L364.32 277.54 L362.72 279.14 L361.12 277.54 Z" fill="#c87850" stroke="#403020" stroke-width="0.7"/>
<path d="M365.34 273.79 L366.94 275.39 L365.34 276.99 L363.74 275.39 Z" fill="#c87850" stroke="#403020" stroke-width="0.7"/>
<path d="M367.97 273.79 L369.57 275.39 L367.97 276.99 L366.37 275.39 Z" fill="#c87850" stroke="#403020" stroke-width="0.7"/>
<path d="M370.60 266.92 L372.20 268.52 L370.60 270.12 L369.00 268.52 Z" fill="#c87850" stroke="#403020" stroke-width="0.7"/>
<path d="M373.22 263.91 L374.82 265.51 L373.22 267.11 L371.62 265.51 Z" fill="#c87850" stroke="#403020" stroke-width="0.7"/>
<path d="M375.85 273.79 L377.45 275.39 L375.85 276.99 L374.25 275.39 Z" fill="#c87850" stroke="#403020" stroke-width="0.7"/>
<path d="M378.47 264.77 L380.07 266.37 L378.47 267.97 L376.87 266.37 Z" fill="#c87850" stroke="#403020" stroke-width="0.7"/>
<path d="M381.10 256.17 L382.70 257.77 L381.10 259.37 L379.50 257.77 Z" fill="#c87850" stroke="#403020" stroke-width="0.7"/>
<path d="M383.73 267.67 L385.33 269.27 L383.73 270.87 L382.13 269.27 Z" fill="#c87850" stroke="#403020" stroke-width="0.7"/>
<path d="M386.35 273.37 L387.95 274.97 L386.35 276.57 L384.75 274.97 Z" fill="#c87850" stroke="#403020" stroke-width="0.7"/>
<path d="M388.98 265.52 L390.58 267.12 L388.98 268.72 L387.38 267.12 Z" fill="#c87850" stroke="#403020" stroke-width="0.7"/>
<path d="M391.60 261.53 L393.20 263.13 L391.60 264.73 L390.00 263.13 Z" fill="#c87850" stroke="#403020" stroke-width="0.7"/>
<path d="M394.23 257.66 L395.83 259.26 L394.23 260.86 L392.63 259.26 Z" fill="#c87850" stroke="#403020" stroke-width="0.7"/>
<path d="M396.86 274.45 L398.46 276.05 L396.86 277.65 L395.26 276.05 Z" fill="#c87850" stroke="#403020" stroke-width="0.7"/>
<path d="M399.48 267.67 L401.08 269.27 L399.48 270.87 L397.88 269.27 Z" fill="#c87850" stroke="#403020" stroke-width="0.7"/>
<path d="M402.11 275.20 L403.71 276.80 L402.11 278.40 L400.51 276.80 Z" fill="#c87850" stroke="#403020" stroke-width="0.7"/>
<path d="M404.73 276.27 L406.33 277.87 L404.73 279.47 L403.13 277.87 Z" fill="#c87850" stroke="#403020" stroke-width="0.7"/>
<path d="M407.36 266.26 L408.96 267.86 L407.36 269.46 L405.76 267.86 Z" fill="#c87850" stroke="#403020" stroke-width="0.7"/>
<path d="M409.99 273.37 L411.59 274.97 L409.99 276.57 L408.39 274.97 Z" fill="#c87850" stroke="#403020" stroke-width="0.7"/>
<path d="M412.61 256.39 L414.21 257.99 L412.61 259.59 L411.01 257.99 Z" fill="#c87850" stroke="#403020" stroke-width="0.7"/>
<path d="M415.24 254.76 L416.84 256.36 L415.24 257.96 L413.64 256.36 Z" fill="#c87850" stroke="#403020" stroke-width="0.7"/>
<path d="M417.86 255.84 L419.46 257.44 L417.86 259.04 L416.26 257.44 Z" fill="#c87850" stroke="#403020" stroke-width="0.7"/>
<path d="M420.49 262.61 L422.09 264.21 L420.49 265.81 L418.89 264.21 Z" fill="#c87850" stroke="#403020" stroke-width="0.7"/>
<path d="M423.12 264.13 L424.72 265.73 L423.12 267.33 L421.52 265.73 Z" fill="#c87850" stroke="#403020" stroke-width="0.7"/>
<path d="M425.74 269.83 L427.34 271.43 L425.74 273.03 L424.14 271.43 Z" fill="#c87850" stroke="#403020" stroke-width="0.7"/>
<path d="M428.37 254.45 L429.97 256.05 L428.37 257.65 L426.77 256.05 Z" fill="#c87850" stroke="#403020" stroke-width="0.7"/>
<path d="M430.99 259.07 L432.59 260.67 L430.99 262.27 L429.39 260.67 Z" fill="#c87850" stroke="#403020" stroke-width="0.7"/>
<path d="M433.62 272.73 L435.22 274.33 L433.62 275.93 L432.02 274.33 Z" fill="#c87850" stroke="#403020" stroke-width="0.7"/>
<path d="M436.25 257.24 L437.85 258.84 L436.25 260.44 L434.65 258.84 Z" fill="#c87850" stroke="#403020" stroke-width="0.7"/>
<path d="M438.87 257.99 L440.47 259.59 L438.87 261.19 L437.27 259.59 Z" fill="#c87850" stroke="#403020" stroke-width="0.7"/>
<path d="M441.50 262.61 L443.10 264.21 L441.50 265.81 L439.90 264.21 Z" fill="#c87850" stroke="#403020" stroke-width="0.7"/>
<path d="M444.12 273.37 L445.72 274.97 L444.12 276.57 L442.52 274.97 Z" fill="#c87850" stroke="#403020" stroke-width="0.7"/>
<path d="M446.75 268.75 L448.35 270.35 L446.75 271.95 L445.15 270.35 Z" fill="#c87850" stroke="#403020" stroke-width="0.7"/>
<path d="M449.38 259.82 L450.98 261.42 L449.38 263.02 L447.78 261.42 Z" fill="#c87850" stroke="#403020" stroke-width="0.7"/>
<path d="M452.00 265.52 L453.60 267.12 L452.00 268.72 L450.40 267.12 Z" fill="#c87850" stroke="#403020" stroke-width="0.7"/>
<path d="M454.63 273.37 L456.23 274.97 L454.63 276.57 L453.03 274.97 Z" fill="#c87850" stroke="#403020" stroke-width="0.7"/>
<path d="M457.25 264.77 L458.85 266.37 L457.25 267.97 L455.65 266.37 Z" fill="#c87850" stroke="#403020" stroke-width="0.7"/>
<path d="M459.88 270.88 L461.48 272.48 L459.88 274.08 L458.28 272.48 Z" fill="#c87850" stroke="#403020" stroke-width="0.7"/>
<path d="M462.51 266.92 L464.11 268.52 L462.51 270.12 L460.91 268.52 Z" fill="#c87850" stroke="#403020" stroke-width="0.7"/>
<path d="M465.13 259.82 L466.73 261.42 L465.13 263.02 L463.53 261.42 Z" fill="#c87850" stroke="#403020" stroke-width="0.7"/>
<path d="M467.76 265.52 L469.36 267.12 L467.76 268.72 L466.16 267.12 Z" fill="#c87850" stroke="#403020" stroke-width="0.7"/>
<path d="M470.38 263.91 L471.98 265.51 L470.38 267.11 L468.78 265.51 Z" fill="#c87850" stroke="#403020" stroke-width="0.7"/>
<path d="M473.01 259.82 L474.61 261.42 L473.01 263.02 L471.41 261.42 Z" fill="#c87850" stroke="#403020" stroke-width="0.7"/>
<path d="M475.64 275.20 L477.24 276.80 L475.64 278.40 L474.04 276.80 Z" fill="#c87850" stroke="#403020" stroke-width="0.7"/>
<path d="M478.26 275.53 L479.86 277.13 L478.26 278.73 L476.66 277.13 Z" fill="#c87850" stroke="#403020" stroke-width="0.7"/>
<path d="M480.89 271.65 L482.49 273.25 L480.89 274.85 L479.29 273.25 Z" fill="#c87850" stroke="#403020" stroke-width="0.7"/>
<path d="M483.51 270.58 L485.11 272.18 L483.51 273.78 L481.91 272.18 Z" fill="#c87850" stroke="#403020" stroke-width="0.7"/>
<path d="M486.14 261.97 L487.74 263.57 L486.14 265.17 L484.54 263.57 Z" fill="#c87850" stroke="#403020" stroke-width="0.7"/>
<path d="M488.77 275.94 L490.37 277.54 L488.77 279.14 L487.17 277.54 Z" fill="#c87850" stroke="#403020" stroke-width="0.7"/>
<path d="M491.39 268.20 L492.99 269.80 L491.39 271.40 L489.79 269.80 Z" fill="#c87850" stroke="#403020" stroke-width="0.7"/>
<path d="M494.02 273.79 L495.62 275.39 L494.02 276.99 L492.42 275.39 Z" fill="#c87850" stroke="#403020" stroke-width="0.7"/>
<path d="M496.64 266.26 L498.24 267.86 L496.64 269.46 L495.04 267.86 Z" fill="#c87850" stroke="#403020" stroke-width="0.7"/>
<path d="M499.27 255.84 L500.87 257.44 L499.27 259.04 L497.67 257.44 Z" fill="#c87850" stroke="#403020" stroke-width="0.7"/>
<path d="M501.90 267.67 L503.50 269.27 L501.90 270.87 L500.30 269.27 Z" fill="#c87850" stroke="#403020" stroke-width="0.7"/>
<path d="M504.52 275.20 L506.12 276.80 L504.52 278.40 L502.92 276.80 Z" fill="#c87850" stroke="#403020" stroke-width="0.7"/>
<path d="M507.15 270.58 L508.75 272.18 L507.15 273.78 L505.55 272.18 Z" fill="#c87850" stroke="#403020" stroke-width="0.7"/>
<path d="M509.77 272.73 L511.37 274.33 L509.77 275.93 L508.17 274.33 Z" fill="#c87850" stroke="#403020" stroke-width="0.7"/>
<path d="M512.40 271.21 L514.00 272.81 L512.40 274.41 L510.80 272.81 Z" fill="#c87850" stroke="#403020" stroke-width="0.7"/>
<path d="M515.03 255.84 L516.63 257.44 L515.03 259.04 L513.43 257.44 Z" fill="#c87850" stroke="#403020" stroke-width="0.7"/>
<path d="M517.65 258.74 L519.25 260.34 L517.65 261.94 L516.05 260.34 Z" fill="#c87850" stroke="#403020" stroke-width="0.7"/>
<path d="M520.28 261.53 L521.88 263.13 L520.28 264.73 L518.68 263.13 Z" fill="#c87850" stroke="#403020" stroke-width="0.7"/>
<path d="M522.90 259.40 L524.50 261.00 L522.90 262.60 L521.30 261.00 Z" fill="#c87850" stroke="#403020" stroke-width="0.7"/>
<path d="M525.53 262.61 L527.13 264.21 L525.53 265.81 L523.93 264.21 Z" fill="#c87850" stroke="#403020" stroke-width="0.7"/>
<path d="M528.16 259.82 L529.76 261.42 L528.16 263.02 L526.56 261.42 Z" fill="#c87850" stroke="#403020" stroke-width="0.7"/>
<path d="M530.78 256.39 L532.38 257.99 L530.78 259.59 L529.18 257.99 Z" fill="#c87850" stroke="#403020" stroke-width="0.7"/>
<path d="M533.41 263.69 L535.01 265.29 L533.41 266.89 L531.81 265.29 Z" fill="#c87850" stroke="#403020" stroke-width="0.7"/>
<path d="M536.03 270.58 L537.63 272.18 L536.03 273.78 L534.43 272.18 Z" fill="#c87850" stroke="#403020" stroke-width="0.7"/>
<path d="M538.66 258.74 L540.26 260.34 L538.66 261.94 L537.06 260.34 Z" fill="#c87850" stroke="#403020" stroke-width="0.7"/>
<path d="M541.29 273.37 L542.89 274.97 L541.29 276.57 L539.69 274.97 Z" fill="#c87850" stroke="#403020" stroke-width="0.7"/>
<path d="M543.91 257.24 L545.51 258.84 L543.91 260.44 L542.31 258.84 Z" fill="#c87850" stroke="#403020" stroke-width="0.7"/>
<path d="M546.54 267.67 L548.14 269.27 L546.54 270.87 L544.94 269.27 Z" fill="#c87850" stroke="#403020" stroke-width="0.7"/>
<path d="M549.16 268.42 L550.76 270.02 L549.16 271.62 L547.56 270.02 Z" fill="#c87850" stroke="#403020" stroke-width="0.7"/>
<path d="M551.79 257.99 L553.39 259.59 L551.79 261.19 L550.19 259.59 Z" fill="#c87850" stroke="#403020" stroke-width="0.7"/>
<path d="M554.42 263.69 L556.02 265.29 L554.42 266.89 L552.82 265.29 Z" fill="#c87850" stroke="#403020" stroke-width="0.7"/>
<path d="M557.04 270.58 L558.64 272.18 L557.04 273.78 L555.44 272.18 Z" fill="#c87850" stroke="#403020" stroke-width="0.7"/>
<path d="M559.67 261.97 L561.27 263.57 L559.67 265.17 L558.07 263.57 Z" fill="#c87850" stroke="#403020" stroke-width="0.7"/>
<path d="M562.29 254.45 L563.89 256.05 L562.29 257.65 L560.69 256.05 Z" fill="#c87850" stroke="#403020" stroke-width="0.7"/>
<path d="M564.92 274.12 L566.52 275.72 L564.92 277.32 L563.32 275.72 Z" fill="#c87850" stroke="#403020" stroke-width="0.7"/>
<path d="M567.55 271.65 L569.15 273.25 L567.55 274.85 L565.95 273.25 Z" fill="#c87850" stroke="#403020" stroke-width="0.7"/>
<path d="M570.17 266.92 L571.77 268.52 L570.17 270.12 L568.57 268.52 Z" fill="#c87850" stroke="#403020" stroke-width="0.7"/>
<path d="M572.80 257.24 L574.40 258.84 L572.80 260.44 L571.20 258.84 Z" fill="#c87850" stroke="#403020" stroke-width="0.7"/>
<path d="M575.42 271.21 L577.02 272.81 L575.42 274.41 L573.82 272.81 Z" fill="#c87850" stroke="#403020" stroke-width="0.7"/>
<path d="M578.05 269.83 L579.65 271.43 L578.05 273.03 L576.45 271.43 Z" fill="#c87850" stroke="#403020" stroke-width="0.7"/>
<path d="M580.68 275.20 L582.28 276.80 L580.68 278.40 L579.08 276.80 Z" fill="#c87850" stroke="#403020" stroke-width="0.7"/>
<path d="M583.30 257.24 L584.90 258.84 L583.30 260.44 L581.70 258.84 Z" fill="#c87850" stroke="#403020" stroke-width="0.7"/>
<path d="M585.93 271.21 L587.53 272.81 L585.93 274.41 L584.33 272.81 Z" fill="#c87850" stroke="#403020" stroke-width="0.7"/>
<path d="M588.55 266.26 L590.15 267.86 L588.55 269.46 L586.95 267.86 Z" fill="#c87850" stroke="#403020" stroke-width="0.7"/>
<path d="M591.18 268.00 L592.78 269.60 L591.18 271.20 L589.58 269.60 Z" fill="#c87850" stroke="#403020" stroke-width="0.7"/>
<path d="M593.81 273.79 L595.41 275.39 L593.81 276.99 L592.21 275.39 Z" fill="#c87850" stroke="#403020" stroke-width="0.7"/>
<path d="M596.43 257.24 L598.03 258.84 L596.43 260.44 L594.83 258.84 Z" fill="#c87850" stroke="#403020" stroke-width="0.7"/>
<path d="M599.06 271.65 L600.66 273.25 L599.06 274.85 L597.46 273.25 Z" fill="#c87850" stroke="#403020" stroke-width="0.7"/>
<path d="M601.68 254.45 L603.28 256.05 L601.68 257.65 L600.08 256.05 Z" fill="#c87850" stroke="#403020" stroke-width="0.7"/>
<path d="M604.31 271.65 L605.91 273.25 L604.31 274.85 L602.71 273.25 Z" fill="#c87850" stroke="#403020" stroke-width="0.7"/>
<path d="M606.94 268.20 L608.54 269.80 L606.94 271.40 L605.34 269.80 Z" fill="#c87850" stroke="#403020" stroke-width="0.7"/>
<path d="M609.56 271.21 L611.16 272.81 L609.56 274.41 L607.96 272.81 Z" fill="#c87850" stroke="#403020" stroke-width="0.7"/>
<path d="M612.19 270.58 L613.79 272.18 L612.19 273.78 L610.59 272.18 Z" fill="#c87850" stroke="#403020" stroke-width="0.7"/>
<path d="M614.81 259.82 L616.41 261.42 L614.81 263.02 L613.21 261.42 Z" fill="#c87850" stroke="#403020" stroke-width="0.7"/>
<path d="M617.44 269.83 L619.04 271.43 L617.44 273.03 L615.84 271.43 Z" fill="#c87850" stroke="#403020" stroke-width="0.7"/>
<path d="M620.07 268.20 L621.67 269.80 L620.07 271.40 L618.47 269.80 Z" fill="#c87850" stroke="#403020" stroke-width="0.7"/>
<path d="M622.69 254.45 L624.29 256.05 L622.69 257.65 L621.09 256.05 Z" fill="#c87850" stroke="#403020" stroke-width="0.7"/>
<path d="M625.32 265.52 L626.92 267.12 L625.32 268.72 L623.72 267.12 Z" fill="#c87850" stroke="#403020" stroke-width="0.7"/>
<path d="M627.94 266.26 L629.54 267.86 L627.94 269.46 L626.34 267.86 Z" fill="#c87850" stroke="#403020" stroke-width="0.7"/>
<path d="M630.57 255.84 L632.17 257.44 L630.57 259.04 L628.97 257.44 Z" fill="#c87850" stroke="#403020" stroke-width="0.7"/>
<path d="M633.20 269.83 L634.80 271.43 L633.20 273.03 L631.60 271.43 Z" fill="#c87850" stroke="#403020" stroke-width="0.7"/>
<path d="M635.82 266.26 L637.42 267.86 L635.82 269.46 L634.22 267.86 Z" fill="#c87850" stroke="#403020" stroke-width="0.7"/>
<path d="M638.45 266.26 L640.05 267.86 L638.45 269.46 L636.85 267.86 Z" fill="#c87850" stroke="#403020" stroke-width="0.7"/>
<path d="M641.07 272.73 L642.67 274.33 L641.07 275.93 L639.47 274.33 Z" fill="#c87850" stroke="#403020" stroke-width="0.7"/>
<path d="M643.70 261.97 L645.30 263.57 L643.70 265.17 L642.10 263.57 Z" fill="#c87850" stroke="#403020" stroke-width="0.7"/>
<path d="M646.33 275.20 L647.93 276.80 L646.33 278.40 L644.73 276.80 Z" fill="#c87850" stroke="#403020" stroke-width="0.7"/>
<path d="M648.95 257.24 L650.55 258.84 L648.95 260.44 L647.35 258.84 Z" fill="#c87850" stroke="#403020" stroke-width="0.7"/>
<path d="M651.58 268.20 L653.18 269.80 L651.58 271.40 L649.98 269.80 Z" fill="#c87850" stroke="#403020" stroke-width="0.7"/>
<path d="M654.20 273.37 L655.80 274.97 L654.20 276.57 L652.60 274.97 Z" fill="#c87850" stroke="#403020" stroke-width="0.7"/>
<path d="M656.83 272.73 L658.43 274.33 L656.83 275.93 L655.23 274.33 Z" fill="#c87850" stroke="#403020" stroke-width="0.7"/>
<path d="M659.46 256.39 L661.06 257.99 L659.46 259.59 L657.86 257.99 Z" fill="#c87850" stroke="#403020" stroke-width="0.7"/>
<path d="M662.08 259.40 L663.68 261.00 L662.08 262.60 L660.48 261.00 Z" fill="#c87850" stroke="#403020" stroke-width="0.7"/>
<path d="M664.71 259.82 L666.31 261.42 L664.71 263.02 L663.11 261.42 Z" fill="#c87850" stroke="#403020" stroke-width="0.7"/>
<path d="M667.33 265.52 L668.93 267.12 L667.33 268.72 L665.73 267.12 Z" fill="#c87850" stroke="#403020" stroke-width="0.7"/>
<path d="M669.96 260.90 L671.56 262.50 L669.96 264.10 L668.36 262.50 Z" fill="#c87850" stroke="#403020" stroke-width="0.7"/>
<path d="M672.59 265.52 L674.19 267.12 L672.59 268.72 L670.99 267.12 Z" fill="#c87850" stroke="#403020" stroke-width="0.7"/>
<path d="M675.21 263.69 L676.81 265.29 L675.21 266.89 L673.61 265.29 Z" fill="#c87850" stroke="#403020" stroke-width="0.7"/>
<path d="M677.84 261.53 L679.44 263.13 L677.84 264.73 L676.24 263.13 Z" fill="#c87850" stroke="#403020" stroke-width="0.7"/>
<path d="M680.46 266.84 L682.06 268.44 L680.46 270.04 L678.86 268.44 Z" fill="#c87850" stroke="#403020" stroke-width="0.7"/>
<path d="M683.09 254.74 L684.69 256.34 L683.09 257.94 L681.49 256.34 Z" fill="#c87850" stroke="#403020" stroke-width="0.7"/>
<path d="M685.72 270.47 L687.32 272.07 L685.72 273.67 L684.12 272.07 Z" fill="#c87850" stroke="#403020" stroke-width="0.7"/>
<path d="M688.34 267.63 L689.94 269.23 L688.34 270.83 L686.74 269.23 Z" fill="#c87850" stroke="#403020" stroke-width="0.7"/>
<path d="M690.97 273.17 L692.57 274.77 L690.97 276.37 L689.37 274.77 Z" fill="#c87850" stroke="#403020" stroke-width="0.7"/>
<path d="M693.59 273.17 L695.19 274.77 L693.59 276.37 L691.99 274.77 Z" fill="#c87850" stroke="#403020" stroke-width="0.7"/>
<path d="M696.22 263.40 L697.82 265.00 L696.22 266.60 L694.62 265.00 Z" fill="#c87850" stroke="#403020" stroke-width="0.7"/>
<path d="M698.85 272.67 L700.45 274.27 L698.85 275.87 L697.25 274.27 Z" fill="#c87850" stroke="#403020" stroke-width="0.7"/>
<path d="M701.47 269.65 L703.07 271.25 L701.47 272.85 L699.87 271.25 Z" fill="#c87850" stroke="#403020" stroke-width="0.7"/>
<path d="M704.10 259.07 L705.70 260.67 L704.10 262.27 L702.50 260.67 Z" fill="#c87850" stroke="#403020" stroke-width="0.7"/>
<path d="M706.72 259.77 L708.32 261.37 L706.72 262.97 L705.12 261.37 Z" fill="#c87850" stroke="#403020" stroke-width="0.7"/>
<path d="M709.35 273.17 L710.95 274.77 L709.35 276.37 L707.75 274.77 Z" fill="#c87850" stroke="#403020" stroke-width="0.7"/>
<path d="M711.98 275.20 L713.58 276.80 L711.98 278.40 L710.38 276.80 Z" fill="#c87850" stroke="#403020" stroke-width="0.7"/>
<path d="M714.60 266.84 L716.20 268.44 L714.60 270.04 L713.00 268.44 Z" fill="#c87850" stroke="#403020" stroke-width="0.7"/>
<path d="M717.23 256.34 L718.83 257.94 L717.23 259.54 L715.63 257.94 Z" fill="#c87850" stroke="#403020" stroke-width="0.7"/>
<path d="M719.85 255.75 L721.45 257.35 L719.85 258.95 L718.25 257.35 Z" fill="#c87850" stroke="#403020" stroke-width="0.7"/>
<path d="M247.17 205.56 L249.80 228.04 L252.43 208.38 L255.05 232.33 L257.68 204.06 L260.30 215.35 L262.93 238.47 L265.56 209.12 L268.18 232.33 L270.81 205.67 L273.43 204.81 L276.06 207.08 L278.69 218.36 L281.31 239.33 L283.94 233.63 L286.56 202.99 L289.19 202.99 L291.82 243.31 L294.44 226.64 L297.07 217.51 L299.69 207.83 L302.32 218.91 L304.95 225.89 L307.57 218.25 L310.20 221.05 L312.82 221.05 L315.45 216.65 L318.08 218.25 L320.70 237.09 L323.33 221.80 L325.95 200.83 L328.58 210.51 L331.21 207.83 L333.83 216.21 L336.46 230.62 L339.08 224.50 L341.71 222.35 L344.34 242.01 L346.96 234.93 L349.59 230.95 L352.21 226.64 L354.84 240.63 L357.47 216.76 L360.09 230.20 L362.72 231.48 L365.34 228.57 L367.97 241.38 L370.60 210.51 L373.22 204.06 L375.85 231.48 L378.47 226.11 L381.10 218.36 L383.73 208.68 L386.35 200.83 L388.98 209.76 L391.60 219.66 L394.23 202.99 L396.86 244.92 L399.48 216.21 L402.11 214.82 L404.73 209.43 L407.36 240.63 L409.99 234.18 L412.61 242.78 L415.24 218.91 L417.86 209.98 L420.49 212.67 L423.12 229.65 L425.74 243.31 L428.37 230.20 L430.99 223.95 L433.62 238.47 L436.25 234.93 L438.87 204.06 L441.50 215.57 L444.12 238.47 L446.75 211.37 L449.38 204.06 L452.00 229.65 L454.63 204.06 L457.25 216.21 L459.88 205.67 L462.51 221.27 L465.13 214.60 L467.76 217.51 L470.38 228.04 L473.01 230.95 L475.64 211.37 L478.26 230.73 L480.89 223.42 L483.51 212.67 L486.14 208.38 L488.77 241.38 L491.39 238.47 L494.02 217.51 L496.64 221.27 L499.27 221.27 L501.90 201.16 L504.52 213.19 L507.15 234.18 L509.77 235.79 L512.40 205.67 L515.03 219.44 L517.65 217.51 L520.28 223.42 L522.90 205.67 L525.53 201.16 L528.16 228.04 L530.78 208.38 L533.41 244.17 L536.03 203.54 L538.66 243.31 L541.29 225.03 L543.91 206.97 L546.54 244.17 L549.16 218.36 L551.79 208.38 L554.42 211.37 L557.04 209.12 L559.67 224.50 L562.29 244.17 L564.92 226.64 L567.55 243.31 L570.17 208.38 L572.80 202.24 L575.42 225.03 L578.05 207.61 L580.68 207.61 L583.30 222.35 L585.93 209.76 L588.55 238.47 L591.18 218.91 L593.81 234.93 L596.43 239.88 L599.06 235.79 L601.68 214.07 L604.31 241.38 L606.94 234.18 L609.56 230.20 L612.19 202.24 L614.81 212.67 L617.44 244.17 L620.07 212.67 L622.69 220.52 L625.32 242.01 L627.94 221.80 L630.57 233.10 L633.20 244.92 L635.82 211.37 L638.45 202.24 L641.07 217.51 L643.70 228.04 L646.33 202.99 L648.95 230.20 L651.58 202.99 L654.20 214.07 L656.83 221.80 L659.46 207.61 L662.08 214.82 L664.71 203.54 L667.33 209.76 L669.96 208.38 L672.59 225.03 L675.21 237.72 L677.84 232.55 L680.46 230.33 L683.09 225.78 L685.72 234.36 L688.34 235.17 L690.97 241.42 L693.59 242.63 L696.22 220.23 L698.85 233.65 L701.47 244.94 L704.10 237.17 L706.72 215.70 L709.35 212.69 L711.98 238.38 L714.60 239.90 L717.23 227.49 L719.85 202.30" stroke="#000000" stroke-width="1.9" fill="none" stroke-linejoin="round"/>
<path d="M247.17 204.21 L248.52 205.56 L247.17 206.91 L245.82 205.56 Z" fill="#f00000" stroke="#c00000" stroke-width="0.3"/>
<path d="M249.80 226.69 L251.15 228.04 L249.80 229.39 L248.45 228.04 Z" fill="#f00000" stroke="#c00000" stroke-width="0.3"/>
<path d="M252.43 207.03 L253.78 208.38 L252.43 209.73 L251.08 208.38 Z" fill="#f00000" stroke="#c00000" stroke-width="0.3"/>
<path d="M255.05 230.98 L256.40 232.33 L255.05 233.68 L253.70 232.33 Z" fill="#f00000" stroke="#c00000" stroke-width="0.3"/>
<path d="M257.68 202.71 L259.03 204.06 L257.68 205.41 L256.33 204.06 Z" fill="#f00000" stroke="#c00000" stroke-width="0.3"/>
<path d="M260.30 214.00 L261.65 215.35 L260.30 216.70 L258.95 215.35 Z" fill="#f00000" stroke="#c00000" stroke-width="0.3"/>
<path d="M262.93 237.12 L264.28 238.47 L262.93 239.82 L261.58 238.47 Z" fill="#f00000" stroke="#c00000" stroke-width="0.3"/>
<path d="M265.56 207.77 L266.91 209.12 L265.56 210.47 L264.21 209.12 Z" fill="#f00000" stroke="#c00000" stroke-width="0.3"/>
<path d="M268.18 230.98 L269.53 232.33 L268.18 233.68 L266.83 232.33 Z" fill="#f00000" stroke="#c00000" stroke-width="0.3"/>
<path d="M270.81 204.32 L272.16 205.67 L270.81 207.02 L269.46 205.67 Z" fill="#f00000" stroke="#c00000" stroke-width="0.3"/>
<path d="M273.43 203.46 L274.78 204.81 L273.43 206.16 L272.08 204.81 Z" fill="#f00000" stroke="#c00000" stroke-width="0.3"/>
<path d="M276.06 205.73 L277.41 207.08 L276.06 208.43 L274.71 207.08 Z" fill="#f00000" stroke="#c00000" stroke-width="0.3"/>
<path d="M278.69 217.01 L280.04 218.36 L278.69 219.71 L277.34 218.36 Z" fill="#f00000" stroke="#c00000" stroke-width="0.3"/>
<path d="M281.31 237.98 L282.66 239.33 L281.31 240.68 L279.96 239.33 Z" fill="#f00000" stroke="#c00000" stroke-width="0.3"/>
<path d="M283.94 232.28 L285.29 233.63 L283.94 234.98 L282.59 233.63 Z" fill="#f00000" stroke="#c00000" stroke-width="0.3"/>
<path d="M286.56 201.64 L287.91 202.99 L286.56 204.34 L285.21 202.99 Z" fill="#f00000" stroke="#c00000" stroke-width="0.3"/>
<path d="M289.19 201.64 L290.54 202.99 L289.19 204.34 L287.84 202.99 Z" fill="#f00000" stroke="#c00000" stroke-width="0.3"/>
<path d="M291.82 241.96 L293.17 243.31 L291.82 244.66 L290.47 243.31 Z" fill="#f00000" stroke="#c00000" stroke-width="0.3"/>
<path d="M294.44 225.29 L295.79 226.64 L294.44 227.99 L293.09 226.64 Z" fill="#f00000" stroke="#c00000" stroke-width="0.3"/>
<path d="M297.07 216.16 L298.42 217.51 L297.07 218.86 L295.72 217.51 Z" fill="#f00000" stroke="#c00000" stroke-width="0.3"/>
<path d="M299.69 206.48 L301.04 207.83 L299.69 209.18 L298.34 207.83 Z" fill="#f00000" stroke="#c00000" stroke-width="0.3"/>
<path d="M302.32 217.56 L303.67 218.91 L302.32 220.26 L300.97 218.91 Z" fill="#f00000" stroke="#c00000" stroke-width="0.3"/>
<path d="M304.95 224.54 L306.30 225.89 L304.95 227.24 L303.60 225.89 Z" fill="#f00000" stroke="#c00000" stroke-width="0.3"/>
<path d="M307.57 216.90 L308.92 218.25 L307.57 219.60 L306.22 218.25 Z" fill="#f00000" stroke="#c00000" stroke-width="0.3"/>
<path d="M310.20 219.70 L311.55 221.05 L310.20 222.40 L308.85 221.05 Z" fill="#f00000" stroke="#c00000" stroke-width="0.3"/>
<path d="M312.82 219.70 L314.17 221.05 L312.82 222.40 L311.47 221.05 Z" fill="#f00000" stroke="#c00000" stroke-width="0.3"/>
<path d="M315.45 215.30 L316.80 216.65 L315.45 218.00 L314.10 216.65 Z" fill="#f00000" stroke="#c00000" stroke-width="0.3"/>
<path d="M318.08 216.90 L319.43 218.25 L318.08 219.60 L316.73 218.25 Z" fill="#f00000" stroke="#c00000" stroke-width="0.3"/>
<path d="M320.70 235.74 L322.05 237.09 L320.70 238.44 L319.35 237.09 Z" fill="#f00000" stroke="#c00000" stroke-width="0.3"/>
<path d="M323.33 220.45 L324.68 221.80 L323.33 223.15 L321.98 221.80 Z" fill="#f00000" stroke="#c00000" stroke-width="0.3"/>
<path d="M325.95 199.48 L327.30 200.83 L325.95 202.18 L324.60 200.83 Z" fill="#f00000" stroke="#c00000" stroke-width="0.3"/>
<path d="M328.58 209.16 L329.93 210.51 L328.58 211.86 L327.23 210.51 Z" fill="#f00000" stroke="#c00000" stroke-width="0.3"/>
<path d="M331.21 206.48 L332.56 207.83 L331.21 209.18 L329.86 207.83 Z" fill="#f00000" stroke="#c00000" stroke-width="0.3"/>
<path d="M333.83 214.86 L335.18 216.21 L333.83 217.56 L332.48 216.21 Z" fill="#f00000" stroke="#c00000" stroke-width="0.3"/>
<path d="M336.46 229.27 L337.81 230.62 L336.46 231.97 L335.11 230.62 Z" fill="#f00000" stroke="#c00000" stroke-width="0.3"/>
<path d="M339.08 223.15 L340.43 224.50 L339.08 225.85 L337.73 224.50 Z" fill="#f00000" stroke="#c00000" stroke-width="0.3"/>
<path d="M341.71 221.00 L343.06 222.35 L341.71 223.70 L340.36 222.35 Z" fill="#f00000" stroke="#c00000" stroke-width="0.3"/>
<path d="M344.34 240.66 L345.69 242.01 L344.34 243.36 L342.99 242.01 Z" fill="#f00000" stroke="#c00000" stroke-width="0.3"/>
<path d="M346.96 233.58 L348.31 234.93 L346.96 236.28 L345.61 234.93 Z" fill="#f00000" stroke="#c00000" stroke-width="0.3"/>
<path d="M349.59 229.60 L350.94 230.95 L349.59 232.30 L348.24 230.95 Z" fill="#f00000" stroke="#c00000" stroke-width="0.3"/>
<path d="M352.21 225.29 L353.56 226.64 L352.21 227.99 L350.86 226.64 Z" fill="#f00000" stroke="#c00000" stroke-width="0.3"/>
<path d="M354.84 239.28 L356.19 240.63 L354.84 241.98 L353.49 240.63 Z" fill="#f00000" stroke="#c00000" stroke-width="0.3"/>
<path d="M357.47 215.41 L358.82 216.76 L357.47 218.11 L356.12 216.76 Z" fill="#f00000" stroke="#c00000" stroke-width="0.3"/>
<path d="M360.09 228.85 L361.44 230.20 L360.09 231.55 L358.74 230.20 Z" fill="#f00000" stroke="#c00000" stroke-width="0.3"/>
<path d="M362.72 230.13 L364.07 231.48 L362.72 232.83 L361.37 231.48 Z" fill="#f00000" stroke="#c00000" stroke-width="0.3"/>
<path d="M365.34 227.22 L366.69 228.57 L365.34 229.92 L363.99 228.57 Z" fill="#f00000" stroke="#c00000" stroke-width="0.3"/>
<path d="M367.97 240.03 L369.32 241.38 L367.97 242.73 L366.62 241.38 Z" fill="#f00000" stroke="#c00000" stroke-width="0.3"/>
<path d="M370.60 209.16 L371.95 210.51 L370.60 211.86 L369.25 210.51 Z" fill="#f00000" stroke="#c00000" stroke-width="0.3"/>
<path d="M373.22 202.71 L374.57 204.06 L373.22 205.41 L371.87 204.06 Z" fill="#f00000" stroke="#c00000" stroke-width="0.3"/>
<path d="M375.85 230.13 L377.20 231.48 L375.85 232.83 L374.50 231.48 Z" fill="#f00000" stroke="#c00000" stroke-width="0.3"/>
<path d="M378.47 224.76 L379.82 226.11 L378.47 227.46 L377.12 226.11 Z" fill="#f00000" stroke="#c00000" stroke-width="0.3"/>
<path d="M381.10 217.01 L382.45 218.36 L381.10 219.71 L379.75 218.36 Z" fill="#f00000" stroke="#c00000" stroke-width="0.3"/>
<path d="M383.73 207.33 L385.08 208.68 L383.73 210.03 L382.38 208.68 Z" fill="#f00000" stroke="#c00000" stroke-width="0.3"/>
<path d="M386.35 199.48 L387.70 200.83 L386.35 202.18 L385.00 200.83 Z" fill="#f00000" stroke="#c00000" stroke-width="0.3"/>
<path d="M388.98 208.41 L390.33 209.76 L388.98 211.11 L387.63 209.76 Z" fill="#f00000" stroke="#c00000" stroke-width="0.3"/>
<path d="M391.60 218.31 L392.95 219.66 L391.60 221.01 L390.25 219.66 Z" fill="#f00000" stroke="#c00000" stroke-width="0.3"/>
<path d="M394.23 201.64 L395.58 202.99 L394.23 204.34 L392.88 202.99 Z" fill="#f00000" stroke="#c00000" stroke-width="0.3"/>
<path d="M396.86 243.57 L398.21 244.92 L396.86 246.27 L395.51 244.92 Z" fill="#f00000" stroke="#c00000" stroke-width="0.3"/>
<path d="M399.48 214.86 L400.83 216.21 L399.48 217.56 L398.13 216.21 Z" fill="#f00000" stroke="#c00000" stroke-width="0.3"/>
<path d="M402.11 213.47 L403.46 214.82 L402.11 216.17 L400.76 214.82 Z" fill="#f00000" stroke="#c00000" stroke-width="0.3"/>
<path d="M404.73 208.08 L406.08 209.43 L404.73 210.78 L403.38 209.43 Z" fill="#f00000" stroke="#c00000" stroke-width="0.3"/>
<path d="M407.36 239.28 L408.71 240.63 L407.36 241.98 L406.01 240.63 Z" fill="#f00000" stroke="#c00000" stroke-width="0.3"/>
<path d="M409.99 232.83 L411.34 234.18 L409.99 235.53 L408.64 234.18 Z" fill="#f00000" stroke="#c00000" stroke-width="0.3"/>
<path d="M412.61 241.43 L413.96 242.78 L412.61 244.13 L411.26 242.78 Z" fill="#f00000" stroke="#c00000" stroke-width="0.3"/>
<path d="M415.24 217.56 L416.59 218.91 L415.24 220.26 L413.89 218.91 Z" fill="#f00000" stroke="#c00000" stroke-width="0.3"/>
<path d="M417.86 208.63 L419.21 209.98 L417.86 211.33 L416.51 209.98 Z" fill="#f00000" stroke="#c00000" stroke-width="0.3"/>
<path d="M420.49 211.32 L421.84 212.67 L420.49 214.02 L419.14 212.67 Z" fill="#f00000" stroke="#c00000" stroke-width="0.3"/>
<path d="M423.12 228.30 L424.47 229.65 L423.12 231.00 L421.77 229.65 Z" fill="#f00000" stroke="#c00000" stroke-width="0.3"/>
<path d="M425.74 241.96 L427.09 243.31 L425.74 244.66 L424.39 243.31 Z" fill="#f00000" stroke="#c00000" stroke-width="0.3"/>
<path d="M428.37 228.85 L429.72 230.20 L428.37 231.55 L427.02 230.20 Z" fill="#f00000" stroke="#c00000" stroke-width="0.3"/>
<path d="M430.99 222.60 L432.34 223.95 L430.99 225.30 L429.64 223.95 Z" fill="#f00000" stroke="#c00000" stroke-width="0.3"/>
<path d="M433.62 237.12 L434.97 238.47 L433.62 239.82 L432.27 238.47 Z" fill="#f00000" stroke="#c00000" stroke-width="0.3"/>
<path d="M436.25 233.58 L437.60 234.93 L436.25 236.28 L434.90 234.93 Z" fill="#f00000" stroke="#c00000" stroke-width="0.3"/>
<path d="M438.87 202.71 L440.22 204.06 L438.87 205.41 L437.52 204.06 Z" fill="#f00000" stroke="#c00000" stroke-width="0.3"/>
<path d="M441.50 214.22 L442.85 215.57 L441.50 216.92 L440.15 215.57 Z" fill="#f00000" stroke="#c00000" stroke-width="0.3"/>
<path d="M444.12 237.12 L445.47 238.47 L444.12 239.82 L442.77 238.47 Z" fill="#f00000" stroke="#c00000" stroke-width="0.3"/>
<path d="M446.75 210.02 L448.10 211.37 L446.75 212.72 L445.40 211.37 Z" fill="#f00000" stroke="#c00000" stroke-width="0.3"/>
<path d="M449.38 202.71 L450.73 204.06 L449.38 205.41 L448.03 204.06 Z" fill="#f00000" stroke="#c00000" stroke-width="0.3"/>
<path d="M452.00 228.30 L453.35 229.65 L452.00 231.00 L450.65 229.65 Z" fill="#f00000" stroke="#c00000" stroke-width="0.3"/>
<path d="M454.63 202.71 L455.98 204.06 L454.63 205.41 L453.28 204.06 Z" fill="#f00000" stroke="#c00000" stroke-width="0.3"/>
<path d="M457.25 214.86 L458.60 216.21 L457.25 217.56 L455.90 216.21 Z" fill="#f00000" stroke="#c00000" stroke-width="0.3"/>
<path d="M459.88 204.32 L461.23 205.67 L459.88 207.02 L458.53 205.67 Z" fill="#f00000" stroke="#c00000" stroke-width="0.3"/>
<path d="M462.51 219.92 L463.86 221.27 L462.51 222.62 L461.16 221.27 Z" fill="#f00000" stroke="#c00000" stroke-width="0.3"/>
<path d="M465.13 213.25 L466.48 214.60 L465.13 215.95 L463.78 214.60 Z" fill="#f00000" stroke="#c00000" stroke-width="0.3"/>
<path d="M467.76 216.16 L469.11 217.51 L467.76 218.86 L466.41 217.51 Z" fill="#f00000" stroke="#c00000" stroke-width="0.3"/>
<path d="M470.38 226.69 L471.73 228.04 L470.38 229.39 L469.03 228.04 Z" fill="#f00000" stroke="#c00000" stroke-width="0.3"/>
<path d="M473.01 229.60 L474.36 230.95 L473.01 232.30 L471.66 230.95 Z" fill="#f00000" stroke="#c00000" stroke-width="0.3"/>
<path d="M475.64 210.02 L476.99 211.37 L475.64 212.72 L474.29 211.37 Z" fill="#f00000" stroke="#c00000" stroke-width="0.3"/>
<path d="M478.26 229.38 L479.61 230.73 L478.26 232.08 L476.91 230.73 Z" fill="#f00000" stroke="#c00000" stroke-width="0.3"/>
<path d="M480.89 222.07 L482.24 223.42 L480.89 224.77 L479.54 223.42 Z" fill="#f00000" stroke="#c00000" stroke-width="0.3"/>
<path d="M483.51 211.32 L484.86 212.67 L483.51 214.02 L482.16 212.67 Z" fill="#f00000" stroke="#c00000" stroke-width="0.3"/>
<path d="M486.14 207.03 L487.49 208.38 L486.14 209.73 L484.79 208.38 Z" fill="#f00000" stroke="#c00000" stroke-width="0.3"/>
<path d="M488.77 240.03 L490.12 241.38 L488.77 242.73 L487.42 241.38 Z" fill="#f00000" stroke="#c00000" stroke-width="0.3"/>
<path d="M491.39 237.12 L492.74 238.47 L491.39 239.82 L490.04 238.47 Z" fill="#f00000" stroke="#c00000" stroke-width="0.3"/>
<path d="M494.02 216.16 L495.37 217.51 L494.02 218.86 L492.67 217.51 Z" fill="#f00000" stroke="#c00000" stroke-width="0.3"/>
<path d="M496.64 219.92 L497.99 221.27 L496.64 222.62 L495.29 221.27 Z" fill="#f00000" stroke="#c00000" stroke-width="0.3"/>
<path d="M499.27 219.92 L500.62 221.27 L499.27 222.62 L497.92 221.27 Z" fill="#f00000" stroke="#c00000" stroke-width="0.3"/>
<path d="M501.90 199.81 L503.25 201.16 L501.90 202.51 L500.55 201.16 Z" fill="#f00000" stroke="#c00000" stroke-width="0.3"/>
<path d="M504.52 211.84 L505.87 213.19 L504.52 214.54 L503.17 213.19 Z" fill="#f00000" stroke="#c00000" stroke-width="0.3"/>
<path d="M507.15 232.83 L508.50 234.18 L507.15 235.53 L505.80 234.18 Z" fill="#f00000" stroke="#c00000" stroke-width="0.3"/>
<path d="M509.77 234.44 L511.12 235.79 L509.77 237.14 L508.42 235.79 Z" fill="#f00000" stroke="#c00000" stroke-width="0.3"/>
<path d="M512.40 204.32 L513.75 205.67 L512.40 207.02 L511.05 205.67 Z" fill="#f00000" stroke="#c00000" stroke-width="0.3"/>
<path d="M515.03 218.09 L516.38 219.44 L515.03 220.79 L513.68 219.44 Z" fill="#f00000" stroke="#c00000" stroke-width="0.3"/>
<path d="M517.65 216.16 L519.00 217.51 L517.65 218.86 L516.30 217.51 Z" fill="#f00000" stroke="#c00000" stroke-width="0.3"/>
<path d="M520.28 222.07 L521.63 223.42 L520.28 224.77 L518.93 223.42 Z" fill="#f00000" stroke="#c00000" stroke-width="0.3"/>
<path d="M522.90 204.32 L524.25 205.67 L522.90 207.02 L521.55 205.67 Z" fill="#f00000" stroke="#c00000" stroke-width="0.3"/>
<path d="M525.53 199.81 L526.88 201.16 L525.53 202.51 L524.18 201.16 Z" fill="#f00000" stroke="#c00000" stroke-width="0.3"/>
<path d="M528.16 226.69 L529.51 228.04 L528.16 229.39 L526.81 228.04 Z" fill="#f00000" stroke="#c00000" stroke-width="0.3"/>
<path d="M530.78 207.03 L532.13 208.38 L530.78 209.73 L529.43 208.38 Z" fill="#f00000" stroke="#c00000" stroke-width="0.3"/>
<path d="M533.41 242.82 L534.76 244.17 L533.41 245.52 L532.06 244.17 Z" fill="#f00000" stroke="#c00000" stroke-width="0.3"/>
<path d="M536.03 202.19 L537.38 203.54 L536.03 204.89 L534.68 203.54 Z" fill="#f00000" stroke="#c00000" stroke-width="0.3"/>
<path d="M538.66 241.96 L540.01 243.31 L538.66 244.66 L537.31 243.31 Z" fill="#f00000" stroke="#c00000" stroke-width="0.3"/>
<path d="M541.29 223.68 L542.64 225.03 L541.29 226.38 L539.94 225.03 Z" fill="#f00000" stroke="#c00000" stroke-width="0.3"/>
<path d="M543.91 205.62 L545.26 206.97 L543.91 208.32 L542.56 206.97 Z" fill="#f00000" stroke="#c00000" stroke-width="0.3"/>
<path d="M546.54 242.82 L547.89 244.17 L546.54 245.52 L545.19 244.17 Z" fill="#f00000" stroke="#c00000" stroke-width="0.3"/>
<path d="M549.16 217.01 L550.51 218.36 L549.16 219.71 L547.81 218.36 Z" fill="#f00000" stroke="#c00000" stroke-width="0.3"/>
<path d="M551.79 207.03 L553.14 208.38 L551.79 209.73 L550.44 208.38 Z" fill="#f00000" stroke="#c00000" stroke-width="0.3"/>
<path d="M554.42 210.02 L555.77 211.37 L554.42 212.72 L553.07 211.37 Z" fill="#f00000" stroke="#c00000" stroke-width="0.3"/>
<path d="M557.04 207.77 L558.39 209.12 L557.04 210.47 L555.69 209.12 Z" fill="#f00000" stroke="#c00000" stroke-width="0.3"/>
<path d="M559.67 223.15 L561.02 224.50 L559.67 225.85 L558.32 224.50 Z" fill="#f00000" stroke="#c00000" stroke-width="0.3"/>
<path d="M562.29 242.82 L563.64 244.17 L562.29 245.52 L560.94 244.17 Z" fill="#f00000" stroke="#c00000" stroke-width="0.3"/>
<path d="M564.92 225.29 L566.27 226.64 L564.92 227.99 L563.57 226.64 Z" fill="#f00000" stroke="#c00000" stroke-width="0.3"/>
<path d="M567.55 241.96 L568.90 243.31 L567.55 244.66 L566.20 243.31 Z" fill="#f00000" stroke="#c00000" stroke-width="0.3"/>
<path d="M570.17 207.03 L571.52 208.38 L570.17 209.73 L568.82 208.38 Z" fill="#f00000" stroke="#c00000" stroke-width="0.3"/>
<path d="M572.80 200.89 L574.15 202.24 L572.80 203.59 L571.45 202.24 Z" fill="#f00000" stroke="#c00000" stroke-width="0.3"/>
<path d="M575.42 223.68 L576.77 225.03 L575.42 226.38 L574.07 225.03 Z" fill="#f00000" stroke="#c00000" stroke-width="0.3"/>
<path d="M578.05 206.26 L579.40 207.61 L578.05 208.96 L576.70 207.61 Z" fill="#f00000" stroke="#c00000" stroke-width="0.3"/>
<path d="M580.68 206.26 L582.03 207.61 L580.68 208.96 L579.33 207.61 Z" fill="#f00000" stroke="#c00000" stroke-width="0.3"/>
<path d="M583.30 221.00 L584.65 222.35 L583.30 223.70 L581.95 222.35 Z" fill="#f00000" stroke="#c00000" stroke-width="0.3"/>
<path d="M585.93 208.41 L587.28 209.76 L585.93 211.11 L584.58 209.76 Z" fill="#f00000" stroke="#c00000" stroke-width="0.3"/>
<path d="M588.55 237.12 L589.90 238.47 L588.55 239.82 L587.20 238.47 Z" fill="#f00000" stroke="#c00000" stroke-width="0.3"/>
<path d="M591.18 217.56 L592.53 218.91 L591.18 220.26 L589.83 218.91 Z" fill="#f00000" stroke="#c00000" stroke-width="0.3"/>
<path d="M593.81 233.58 L595.16 234.93 L593.81 236.28 L592.46 234.93 Z" fill="#f00000" stroke="#c00000" stroke-width="0.3"/>
<path d="M596.43 238.53 L597.78 239.88 L596.43 241.23 L595.08 239.88 Z" fill="#f00000" stroke="#c00000" stroke-width="0.3"/>
<path d="M599.06 234.44 L600.41 235.79 L599.06 237.14 L597.71 235.79 Z" fill="#f00000" stroke="#c00000" stroke-width="0.3"/>
<path d="M601.68 212.72 L603.03 214.07 L601.68 215.42 L600.33 214.07 Z" fill="#f00000" stroke="#c00000" stroke-width="0.3"/>
<path d="M604.31 240.03 L605.66 241.38 L604.31 242.73 L602.96 241.38 Z" fill="#f00000" stroke="#c00000" stroke-width="0.3"/>
<path d="M606.94 232.83 L608.29 234.18 L606.94 235.53 L605.59 234.18 Z" fill="#f00000" stroke="#c00000" stroke-width="0.3"/>
<path d="M609.56 228.85 L610.91 230.20 L609.56 231.55 L608.21 230.20 Z" fill="#f00000" stroke="#c00000" stroke-width="0.3"/>
<path d="M612.19 200.89 L613.54 202.24 L612.19 203.59 L610.84 202.24 Z" fill="#f00000" stroke="#c00000" stroke-width="0.3"/>
<path d="M614.81 211.32 L616.16 212.67 L614.81 214.02 L613.46 212.67 Z" fill="#f00000" stroke="#c00000" stroke-width="0.3"/>
<path d="M617.44 242.82 L618.79 244.17 L617.44 245.52 L616.09 244.17 Z" fill="#f00000" stroke="#c00000" stroke-width="0.3"/>
<path d="M620.07 211.32 L621.42 212.67 L620.07 214.02 L618.72 212.67 Z" fill="#f00000" stroke="#c00000" stroke-width="0.3"/>
<path d="M622.69 219.17 L624.04 220.52 L622.69 221.87 L621.34 220.52 Z" fill="#f00000" stroke="#c00000" stroke-width="0.3"/>
<path d="M625.32 240.66 L626.67 242.01 L625.32 243.36 L623.97 242.01 Z" fill="#f00000" stroke="#c00000" stroke-width="0.3"/>
<path d="M627.94 220.45 L629.29 221.80 L627.94 223.15 L626.59 221.80 Z" fill="#f00000" stroke="#c00000" stroke-width="0.3"/>
<path d="M630.57 231.75 L631.92 233.10 L630.57 234.45 L629.22 233.10 Z" fill="#f00000" stroke="#c00000" stroke-width="0.3"/>
<path d="M633.20 243.57 L634.55 244.92 L633.20 246.27 L631.85 244.92 Z" fill="#f00000" stroke="#c00000" stroke-width="0.3"/>
<path d="M635.82 210.02 L637.17 211.37 L635.82 212.72 L634.47 211.37 Z" fill="#f00000" stroke="#c00000" stroke-width="0.3"/>
<path d="M638.45 200.89 L639.80 202.24 L638.45 203.59 L637.10 202.24 Z" fill="#f00000" stroke="#c00000" stroke-width="0.3"/>
<path d="M641.07 216.16 L642.42 217.51 L641.07 218.86 L639.72 217.51 Z" fill="#f00000" stroke="#c00000" stroke-width="0.3"/>
<path d="M643.70 226.69 L645.05 228.04 L643.70 229.39 L642.35 228.04 Z" fill="#f00000" stroke="#c00000" stroke-width="0.3"/>
<path d="M646.33 201.64 L647.68 202.99 L646.33 204.34 L644.98 202.99 Z" fill="#f00000" stroke="#c00000" stroke-width="0.3"/>
<path d="M648.95 228.85 L650.30 230.20 L648.95 231.55 L647.60 230.20 Z" fill="#f00000" stroke="#c00000" stroke-width="0.3"/>
<path d="M651.58 201.64 L652.93 202.99 L651.58 204.34 L650.23 202.99 Z" fill="#f00000" stroke="#c00000" stroke-width="0.3"/>
<path d="M654.20 212.72 L655.55 214.07 L654.20 215.42 L652.85 214.07 Z" fill="#f00000" stroke="#c00000" stroke-width="0.3"/>
<path d="M656.83 220.45 L658.18 221.80 L656.83 223.15 L655.48 221.80 Z" fill="#f00000" stroke="#c00000" stroke-width="0.3"/>
<path d="M659.46 206.26 L660.81 207.61 L659.46 208.96 L658.11 207.61 Z" fill="#f00000" stroke="#c00000" stroke-width="0.3"/>
<path d="M662.08 213.47 L663.43 214.82 L662.08 216.17 L660.73 214.82 Z" fill="#f00000" stroke="#c00000" stroke-width="0.3"/>
<path d="M664.71 202.19 L666.06 203.54 L664.71 204.89 L663.36 203.54 Z" fill="#f00000" stroke="#c00000" stroke-width="0.3"/>
<path d="M667.33 208.41 L668.68 209.76 L667.33 211.11 L665.98 209.76 Z" fill="#f00000" stroke="#c00000" stroke-width="0.3"/>
<path d="M669.96 207.03 L671.31 208.38 L669.96 209.73 L668.61 208.38 Z" fill="#f00000" stroke="#c00000" stroke-width="0.3"/>
<path d="M672.59 223.68 L673.94 225.03 L672.59 226.38 L671.24 225.03 Z" fill="#f00000" stroke="#c00000" stroke-width="0.3"/>
<path d="M675.21 236.37 L676.56 237.72 L675.21 239.07 L673.86 237.72 Z" fill="#f00000" stroke="#c00000" stroke-width="0.3"/>
<path d="M677.84 231.20 L679.19 232.55 L677.84 233.90 L676.49 232.55 Z" fill="#f00000" stroke="#c00000" stroke-width="0.3"/>
<path d="M680.46 228.98 L681.81 230.33 L680.46 231.68 L679.11 230.33 Z" fill="#f00000" stroke="#c00000" stroke-width="0.3"/>
<path d="M683.09 224.43 L684.44 225.78 L683.09 227.13 L681.74 225.78 Z" fill="#f00000" stroke="#c00000" stroke-width="0.3"/>
<path d="M685.72 233.01 L687.07 234.36 L685.72 235.71 L684.37 234.36 Z" fill="#f00000" stroke="#c00000" stroke-width="0.3"/>
<path d="M688.34 233.82 L689.69 235.17 L688.34 236.52 L686.99 235.17 Z" fill="#f00000" stroke="#c00000" stroke-width="0.3"/>
<path d="M690.97 240.07 L692.32 241.42 L690.97 242.77 L689.62 241.42 Z" fill="#f00000" stroke="#c00000" stroke-width="0.3"/>
<path d="M693.59 241.28 L694.94 242.63 L693.59 243.98 L692.24 242.63 Z" fill="#f00000" stroke="#c00000" stroke-width="0.3"/>
<path d="M696.22 218.88 L697.57 220.23 L696.22 221.58 L694.87 220.23 Z" fill="#f00000" stroke="#c00000" stroke-width="0.3"/>
<path d="M698.85 232.30 L700.20 233.65 L698.85 235.00 L697.50 233.65 Z" fill="#f00000" stroke="#c00000" stroke-width="0.3"/>
<path d="M701.47 243.59 L702.82 244.94 L701.47 246.29 L700.12 244.94 Z" fill="#f00000" stroke="#c00000" stroke-width="0.3"/>
<path d="M704.10 235.82 L705.45 237.17 L704.10 238.52 L702.75 237.17 Z" fill="#f00000" stroke="#c00000" stroke-width="0.3"/>
<path d="M706.72 214.35 L708.07 215.70 L706.72 217.05 L705.37 215.70 Z" fill="#f00000" stroke="#c00000" stroke-width="0.3"/>
<path d="M709.35 211.34 L710.70 212.69 L709.35 214.04 L708.00 212.69 Z" fill="#f00000" stroke="#c00000" stroke-width="0.3"/>
<path d="M711.98 237.03 L713.33 238.38 L711.98 239.73 L710.63 238.38 Z" fill="#f00000" stroke="#c00000" stroke-width="0.3"/>
<path d="M714.60 238.55 L715.95 239.90 L714.60 241.25 L713.25 239.90 Z" fill="#f00000" stroke="#c00000" stroke-width="0.3"/>
<path d="M717.23 226.14 L718.58 227.49 L717.23 228.84 L715.88 227.49 Z" fill="#f00000" stroke="#c00000" stroke-width="0.3"/>
<path d="M719.85 200.95 L721.20 202.30 L719.85 203.65 L718.50 202.30 Z" fill="#f00000" stroke="#c00000" stroke-width="0.3"/>
</g>
<text x="717.5" y="107.79999999999997" font-size="7.8" fill="#ff3850" text-anchor="end" font-weight="normal" letter-spacing="-0.15" >Overrange</text>
<text x="717.5" y="130.45999999999998" font-size="7.8" fill="#ff3850" text-anchor="end" font-weight="normal" letter-spacing="0.19" >HighHigh</text>
<rect x="685" y="277.0" width="34" height="9.5" fill="#ebebeb"/>
<text x="717.5" y="283.8" font-size="7.8" fill="#ff3850" text-anchor="end" font-weight="normal" letter-spacing="0.23" >LowLow</text>
<text x="717.5" y="327.8" font-size="7.8" fill="#ff3850" text-anchor="end" font-weight="normal" letter-spacing="0.0" >Underrange</text>
<rect x="213" y="363" width="527" height="10" fill="#d4d0c8" />
<rect x="213" y="372.5" width="527" height="1.1" fill="#555555" />
<rect x="213" y="363" width="527" height="0.7" fill="#ffffff" />
<rect x="330.8" y="363" width="1" height="10" fill="#808080" />
<rect x="331.8" y="363" width="0.8" height="10" fill="#ffffff" />
<rect x="409.8" y="363" width="1" height="10" fill="#808080" />
<rect x="410.8" y="363" width="0.8" height="10" fill="#ffffff" />
<rect x="537.0" y="363" width="1" height="10" fill="#808080" />
<rect x="538.0" y="363" width="0.8" height="10" fill="#ffffff" />
<rect x="580.7" y="363" width="1" height="10" fill="#808080" />
<rect x="581.7" y="363" width="0.8" height="10" fill="#ffffff" />
<text x="217.4" y="371.1" font-size="7.8" fill="#202020" text-anchor="start" font-weight="normal" letter-spacing="-0.2" >Trace</text>
<text x="336" y="371.1" font-size="7.8" fill="#202020" text-anchor="start" font-weight="normal" letter-spacing="-0.2" >Type</text>
<text x="415" y="371.1" font-size="7.8" fill="#202020" text-anchor="start" font-weight="normal" letter-spacing="-0.2" >Ruler Value</text>
<text x="542.2" y="371.1" font-size="7.8" fill="#202020" text-anchor="start" font-weight="normal" letter-spacing="-0.2" >Axis</text>
<rect x="213.5" y="373.6" width="368.3" height="12.3" fill="#000000" />
<rect x="215.8" y="375.8" width="8" height="8" fill="#ffffff" />
<path d="M216.2 383.6 V376.20000000000005 H223.6" stroke="#808080" stroke-width="0.9" fill="none"/>
<path d="M217 383.0 V377.0 H222.8" stroke="#404040" stroke-width="0.6" fill="none"/>
<path d="M223.6 376.20000000000005 V383.6 H216.2" stroke="#e8e8e8" stroke-width="0.8" fill="none"/>
<path d="M218.3 379.6 L219.6 381.20000000000005 L222.1 378.0" stroke="#000" stroke-width="1.0" fill="none"/>
<path d="M229.7 378.20000000000005 L231.3 379.8 L229.7 381.40000000000003 L228.1 379.8 Z" fill="#00b000"/>
<text x="240.6" y="382.6" font-size="7.8" fill="#ffffff" text-anchor="start" font-weight="normal" letter-spacing="-0.2" >Trends.Sensor11</text>
<text x="336" y="382.6" font-size="7.8" fill="#ffffff" text-anchor="start" font-weight="normal" letter-spacing="-0.2" >Processed Historic</text>
<text x="415" y="382.6" font-size="7.8" fill="#ffffff" text-anchor="start" font-weight="normal" letter-spacing="-0.2" >-</text>
<text x="542.5" y="382.6" font-size="7.8" fill="#ffffff" text-anchor="start" font-weight="normal" letter-spacing="-0.2" >Y Axis 1</text>
<rect x="215.8" y="388.2" width="8" height="8" fill="#ffffff" />
<path d="M216.2 396.0 V388.6 H223.6" stroke="#808080" stroke-width="0.9" fill="none"/>
<path d="M217 395.4 V389.4 H222.8" stroke="#404040" stroke-width="0.6" fill="none"/>
<path d="M223.6 388.6 V396.0 H216.2" stroke="#e8e8e8" stroke-width="0.8" fill="none"/>
<path d="M218.3 392.0 L219.6 393.6 L222.1 390.4" stroke="#000" stroke-width="1.0" fill="none"/>
<path d="M229.7 390.6 L231.3 392.2 L229.7 393.8 L228.1 392.2 Z" fill="#00b000"/>
<text x="240.6" y="395.0" font-size="7.8" fill="#fbb040" text-anchor="start" font-weight="normal" letter-spacing="-0.2" >Trends.Sensor12</text>
<text x="336" y="395.0" font-size="7.8" fill="#fbb040" text-anchor="start" font-weight="normal" letter-spacing="-0.2" >Raw Historic</text>
<text x="415" y="395.0" font-size="7.8" fill="#fbb040" text-anchor="start" font-weight="normal" letter-spacing="-0.2" >-</text>
<text x="542.5" y="395.0" font-size="7.8" fill="#fbb040" text-anchor="start" font-weight="normal" letter-spacing="-0.2" >Y Axis 1</text>
<rect x="215.8" y="400.6" width="8" height="8" fill="#ffffff" />
<path d="M216.2 408.40000000000003 V401.00000000000006 H223.6" stroke="#808080" stroke-width="0.9" fill="none"/>
<path d="M217 407.8 V401.8 H222.8" stroke="#404040" stroke-width="0.6" fill="none"/>
<path d="M223.6 401.00000000000006 V408.40000000000003 H216.2" stroke="#e8e8e8" stroke-width="0.8" fill="none"/>
<path d="M218.3 404.40000000000003 L219.6 406.00000000000006 L222.1 402.8" stroke="#000" stroke-width="1.0" fill="none"/>
<path d="M229.7 403.00000000000006 L231.3 404.6 L229.7 406.20000000000005 L228.1 404.6 Z" fill="#00b000"/>
<text x="240.6" y="407.40000000000003" font-size="7.8" fill="#9870b0" text-anchor="start" font-weight="normal" letter-spacing="-0.2" >Trends.Sensor13</text>
<text x="336" y="407.40000000000003" font-size="7.8" fill="#9870b0" text-anchor="start" font-weight="normal" letter-spacing="-0.2" >Processed Historic</text>
<text x="415" y="407.40000000000003" font-size="7.8" fill="#9870b0" text-anchor="start" font-weight="normal" letter-spacing="-0.2" >-</text>
<text x="542.5" y="407.40000000000003" font-size="7.8" fill="#9870b0" text-anchor="start" font-weight="normal" letter-spacing="-0.2" >Y Axis 1</text>
<rect x="35" y="251.2" width="63.5" height="14.4" rx="4" ry="4" fill="none" stroke="#000" stroke-width="2.1"/>
<rect x="210.3" y="397.6" width="374.6" height="15.2" rx="4.5" ry="4.5" fill="none" stroke="#000" stroke-width="2"/>
<path d="M98.5 257.7 L145.8 257.7 L173.6 261.3 Q188 264.5 201.5 269.2 Q214 275 225.7 285 Q233 292 240.2 300.6 Q248 309 253.5 317.6 Q257 327 258.5 337.5 Q261 345 262.6 353.6 L262.6 390" stroke="#ff0000" stroke-width="2.2" fill="none" stroke-linejoin="round"/>
<path d="M255.3 388 L268.8 388 L262.3 397.6 Z" fill="#ff0000"/>
<rect x="261" y="404.8" width="2.1" height="73.5" fill="#000" />
<rect x="180" y="524.8" width="370" height="59.8" fill="#dddcf7" />
<text x="180.8" y="537.2" font-size="12.95" fill="#000" letter-spacing="0">Other traces can be added to a 'standard' ad hoc Trend</text>
<text x="180.8" y="553.2" font-size="12.95" fill="#000" letter-spacing="0">(when displayed in <tspan font-weight="bold">Design</tspan> mode). Just drag the required</text>
<text x="180.8" y="568.9" font-size="12.95" fill="#000" letter-spacing="0">database items onto the Trend's Trace Key area.</text>
</svg>
</body></html>
